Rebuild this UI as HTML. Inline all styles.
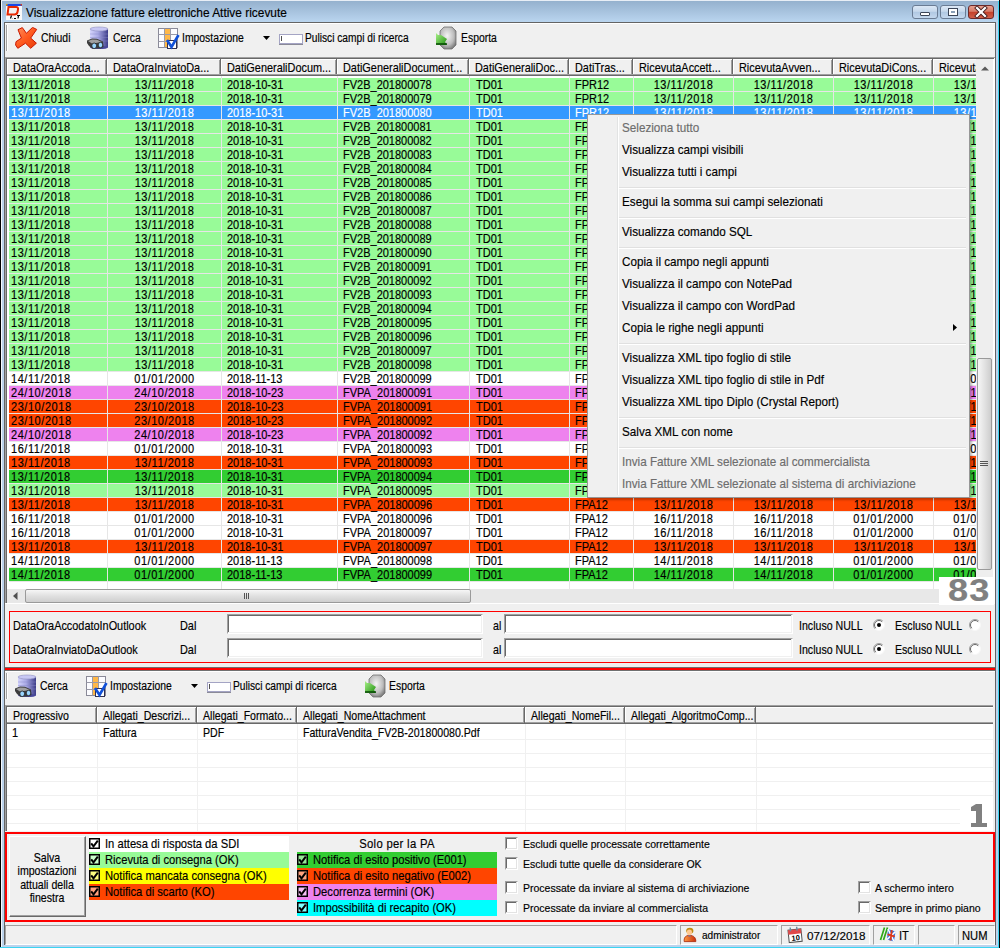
<!DOCTYPE html>
<html><head><meta charset="utf-8"><title>Visualizzazione fatture elettroniche Attive ricevute</title><style>*{margin:0;padding:0;box-sizing:border-box}
html,body{width:1000px;height:948px;overflow:hidden}
body{position:relative;background:#f0f0f0;font-family:"Liberation Sans",sans-serif;color:#000}
.a{position:absolute}
.t{position:absolute;white-space:nowrap;font-family:"Liberation Sans",sans-serif;-webkit-text-stroke-width:0.15px}
svg{display:block}</style></head><body>
<div class="a" style="left:0px;top:0px;width:1000px;height:948px;background:#bcd3ec"></div>
<div class="a" style="left:0px;top:0px;width:1000px;height:22px;background:linear-gradient(#93afcc,#bad5ef)"></div>
<div class="a" style="left:0px;top:0px;width:1px;height:948px;background:#000"></div>
<div class="a" style="left:1px;top:1px;width:1px;height:947px;background:#f4f8fc"></div>
<div class="a" style="left:999px;top:0px;width:1px;height:948px;background:#000"></div>
<div class="a" style="left:998px;top:1px;width:1px;height:947px;background:#3cd4f2"></div>
<div class="a" style="left:0px;top:947px;width:999px;height:1px;background:#3cd4f2"></div>
<div class="a" style="left:1px;top:0px;width:998px;height:1px;background:#e8eef6"></div>
<div class="a" style="left:4px;top:22px;width:992px;height:923px;background:#f0f0f0;border-top:1px solid #646464;border-left:1px solid #646464;border-right:1px solid #646464"></div>
<div class="a" style="left:5px;top:23px;width:990px;height:1px;background:#fff"></div>
<svg class="a" style="left:6px;top:4px" width="16" height="16" viewBox="0 0 16 16"><rect x="0" y="0" width="16" height="16" fill="#f8f8f8"/><rect x="0" y="0" width="16" height="2" fill="#1848e8"/><rect x="0" y="0" width="1.5" height="1.5" fill="#e0a000"/><rect x="14.5" y="0" width="1.5" height="1.5" fill="#e04010"/><path d="M2.5 3 H10 Q12.5 3 12 5.5 L11.5 8 Q11 10.5 8.5 10.5 H1.5 Z" fill="#f0f0f0" stroke="#e82800" stroke-width="2"/><path d="M4.5 14.5 L5.5 11.5 M6.5 14.5 L6.8 14.5 M8 14.5 H10 M11 11.5 H14 M12.5 11.5 L12 14.5" stroke="#000" stroke-width="1.2"/></svg>
<div class="t" style="left:26px;top:8px;font-size:11.9px;line-height:11.9px;color:#000;transform:scaleY(1.12);transform-origin:0 10px;">Visualizzazione fatture elettroniche Attive ricevute</div>
<div class="a" style="left:912px;top:5px;width:26px;height:14px;background:linear-gradient(#dce8f5 0%,#c6d8ec 45%,#b0c8e2 50%,#c4d8ee 100%);border:1px solid #6a7c94;border-radius:3px"></div>
<div class="a" style="left:940px;top:5px;width:26px;height:14px;background:linear-gradient(#dce8f5 0%,#c6d8ec 45%,#b0c8e2 50%,#c4d8ee 100%);border:1px solid #6a7c94;border-radius:3px"></div>
<div class="a" style="left:968px;top:5px;width:26px;height:14px;background:linear-gradient(#e8a090 0%,#d67a66 45%,#c4402a 50%,#d0604a 100%);border:1px solid #6b2a2a;border-radius:3px"></div>
<div class="a" style="left:920px;top:12px;width:10px;height:4px;background:#fff;border:1px solid #3c4658;border-radius:1px"></div>
<div class="a" style="left:948px;top:8px;width:10px;height:8px;background:#fff;border:1px solid #3c4658;"></div>
<div class="a" style="left:951px;top:11px;width:4px;height:2px;background:#8aa0b8;"></div>
<svg class="a" style="left:974px;top:6px" width="14" height="12" viewBox="0 0 14 12"><path d="M3 2 L11 10 M11 2 L3 10" stroke="#4a2020" stroke-width="4" stroke-linecap="square"/><path d="M3 2 L11 10 M11 2 L3 10" stroke="#fff" stroke-width="2.2" stroke-linecap="square"/></svg>
<div class="a" style="left:6px;top:25px;width:1px;height:26px;background:#a0a0a0"></div>
<div class="a" style="left:7px;top:25px;width:1px;height:26px;background:#fff"></div>
<svg class="a" style="left:15px;top:27px" width="23" height="23" viewBox="0 0 23 23"><defs><linearGradient id="gx" x1="0" y1="0" x2="1" y2="1"><stop offset="0" stop-color="#ff9060"/><stop offset="0.5" stop-color="#ff5a20"/><stop offset="1" stop-color="#e83c08"/></linearGradient></defs><path d="M3 2.7 L7.3 0.6 L11.4 6.3 L17.5 0.4 L21.7 2.4 L15.7 11.1 L21.4 16.2 L15.7 21.3 L10.5 16.2 L2.8 21.3 L0.6 18 L1 14.7 L6.4 11.1 Z" fill="url(#gx)" stroke="#c81800" stroke-width="1" stroke-linejoin="round"/></svg>
<div class="t" style="left:41px;top:34px;font-size:10.4px;line-height:10.4px;color:#000;transform:scaleY(1.2);transform-origin:0 9px;">Chiudi</div>
<svg class="a" style="left:84px;top:24px" width="28" height="28" viewBox="0 0 28 28"><defs><linearGradient id="gdb" x1="0" x2="1"><stop offset="0" stop-color="#d4d4fc"/><stop offset="0.45" stop-color="#a8a8e4"/><stop offset="1" stop-color="#3c3c88"/></linearGradient></defs><rect x="6" y="5" width="18" height="18.5" fill="url(#gdb)"/><ellipse cx="15" cy="5" rx="9" ry="2" fill="#c8c8f4" stroke="#9090c0" stroke-width="0.6"/><ellipse cx="15" cy="23.5" rx="9" ry="1.6" fill="#48489a"/><path d="M6 10 H24 M6 13.5 H24 M6 17 H24" stroke="#8888c8" stroke-width="0.7" opacity="0.6"/><path d="M3 16.5 L8 14.5 L13 14.8 L19 17.5 L19.5 23 L16 24.5 L12 24.5 L9 25 L5 22 L3 19 Z" fill="#3c3c3c"/><path d="M4 17 L8 15.5 L13 15.8 L18 18 L12 19 L8 19.5 Z" fill="#a0a0a0"/><ellipse cx="10.2" cy="21.8" rx="2.4" ry="2.8" fill="#9ad6ff" stroke="#202020" stroke-width="0.8"/><ellipse cx="16.5" cy="21" rx="2.3" ry="2.7" fill="#9ad6ff" stroke="#202020" stroke-width="0.8"/></svg>
<div class="t" style="left:113px;top:34px;font-size:10.4px;line-height:10.4px;color:#000;transform:scaleY(1.2);transform-origin:0 9px;">Cerca</div>
<svg class="a" style="left:157px;top:27px" width="24" height="23" viewBox="0 0 24 23"><rect x="1.5" y="1.5" width="19" height="19" fill="#fcfcff" stroke="#8a8a98"/><rect x="8" y="2" width="5.5" height="18" fill="#ffb848"/><path d="M1.5 7.5 H20.5 M1.5 14.5 H20.5 M7.5 1.5 V20.5 M13.5 1.5 V20.5" stroke="#9a9aa8" stroke-width="1"/><rect x="10.5" y="13.5" width="9" height="8" fill="#fff" stroke="#303050"/><path d="M10 13 L14.5 20 L21.5 8" fill="none" stroke="#1050d8" stroke-width="2.6"/></svg>
<div class="t" style="left:182px;top:34px;font-size:10.4px;line-height:10.4px;color:#000;transform:scaleY(1.2);transform-origin:0 9px;">Impostazione</div>
<svg class="a" style="left:263px;top:36px" width="8" height="5" viewBox="0 0 8 5"><path d="M0 0 H7 L3.5 4 Z" fill="#000"/></svg>
<div class="a" style="left:279px;top:34px;width:24px;height:10px;background:#fff;border:1px solid #a4a4c4;box-shadow:0 1px 0 #8a8a98"></div>
<div class="a" style="left:281px;top:36px;width:1px;height:5px;background:#505050"></div>
<div class="t" style="left:305px;top:34px;font-size:10.2px;line-height:10.2px;color:#000;transform:scaleY(1.2);transform-origin:0 9px;">Pulisci campi di ricerca</div>
<svg class="a" style="left:432px;top:24px" width="28" height="28" viewBox="0 0 28 28"><defs><radialGradient id="ge" cx="0.45" cy="0.4" r="0.7"><stop offset="0" stop-color="#f4f4f4"/><stop offset="0.6" stop-color="#bdbdbd"/><stop offset="1" stop-color="#6a6a6a"/></radialGradient><linearGradient id="gg" x1="0" y1="0" x2="1" y2="1"><stop offset="0" stop-color="#a8f088"/><stop offset="1" stop-color="#209010"/></linearGradient></defs><path d="M12 3 H20 L24 7 V21 L20 25 H12 L8 21 V7 Z" fill="url(#ge)" stroke="#707070" stroke-width="0.8"/><path d="M4 9 L6 11 L9 11 L15 15 L13 18 L15 21 L4 21 Z" fill="url(#gg)"/><path d="M4 20 H15" stroke="#004000" stroke-width="1.4"/></svg>
<div class="t" style="left:461px;top:34px;font-size:10.4px;line-height:10.4px;color:#000;transform:scaleY(1.2);transform-origin:0 9px;">Esporta</div>
<div class="a" style="left:5px;top:57px;width:990px;height:547px;background:#fff;border-top:1px solid #a0a0a0;border-left:1px solid #a0a0a0;"></div>
<div class="a" style="left:6px;top:58px;width:988px;height:1px;background:#696969"></div>
<div class="a" style="left:6px;top:58px;width:1px;height:545px;background:#696969"></div>
<div class="a" style="left:5px;top:603px;width:990px;height:1px;background:#fff"></div>
<div class="a" style="left:7px;top:59px;width:969px;height:530px;overflow:hidden">
<div class="a" style="left:0px;top:0px;width:100px;height:17px;background:#f0f0f0;border-top:1px solid #fff;border-left:1px solid #fff;"></div>
<div class="a" style="left:99px;top:0px;width:1px;height:17px;background:#696969"></div>
<div class="a" style="left:98px;top:1px;width:1px;height:15px;background:#a0a0a0"></div>
<div class="a" style="left:0px;top:15px;width:100px;height:1px;background:#a0a0a0"></div>
<div class="a" style="left:0px;top:16px;width:100px;height:1px;background:#696969"></div>
<div class="t" style="left:6px;top:4px;font-size:10.9px;line-height:10.9px;color:#000;transform:scaleY(1.125);transform-origin:0 9px;">DataOraAccoda...</div>
<div class="a" style="left:100px;top:0px;width:114px;height:17px;background:#f0f0f0;border-top:1px solid #fff;border-left:1px solid #fff;"></div>
<div class="a" style="left:213px;top:0px;width:1px;height:17px;background:#696969"></div>
<div class="a" style="left:212px;top:1px;width:1px;height:15px;background:#a0a0a0"></div>
<div class="a" style="left:100px;top:15px;width:114px;height:1px;background:#a0a0a0"></div>
<div class="a" style="left:100px;top:16px;width:114px;height:1px;background:#696969"></div>
<div class="t" style="left:106px;top:4px;font-size:10.9px;line-height:10.9px;color:#000;transform:scaleY(1.125);transform-origin:0 9px;">DataOraInviatoDa...</div>
<div class="a" style="left:214px;top:0px;width:116px;height:17px;background:#f0f0f0;border-top:1px solid #fff;border-left:1px solid #fff;"></div>
<div class="a" style="left:329px;top:0px;width:1px;height:17px;background:#696969"></div>
<div class="a" style="left:328px;top:1px;width:1px;height:15px;background:#a0a0a0"></div>
<div class="a" style="left:214px;top:15px;width:116px;height:1px;background:#a0a0a0"></div>
<div class="a" style="left:214px;top:16px;width:116px;height:1px;background:#696969"></div>
<div class="t" style="left:220px;top:4px;font-size:10.9px;line-height:10.9px;color:#000;transform:scaleY(1.125);transform-origin:0 9px;">DatiGeneraliDocum...</div>
<div class="a" style="left:330px;top:0px;width:132px;height:17px;background:#f0f0f0;border-top:1px solid #fff;border-left:1px solid #fff;"></div>
<div class="a" style="left:461px;top:0px;width:1px;height:17px;background:#696969"></div>
<div class="a" style="left:460px;top:1px;width:1px;height:15px;background:#a0a0a0"></div>
<div class="a" style="left:330px;top:15px;width:132px;height:1px;background:#a0a0a0"></div>
<div class="a" style="left:330px;top:16px;width:132px;height:1px;background:#696969"></div>
<div class="t" style="left:336px;top:4px;font-size:10.9px;line-height:10.9px;color:#000;transform:scaleY(1.125);transform-origin:0 9px;">DatiGeneraliDocument...</div>
<div class="a" style="left:462px;top:0px;width:100px;height:17px;background:#f0f0f0;border-top:1px solid #fff;border-left:1px solid #fff;"></div>
<div class="a" style="left:561px;top:0px;width:1px;height:17px;background:#696969"></div>
<div class="a" style="left:560px;top:1px;width:1px;height:15px;background:#a0a0a0"></div>
<div class="a" style="left:462px;top:15px;width:100px;height:1px;background:#a0a0a0"></div>
<div class="a" style="left:462px;top:16px;width:100px;height:1px;background:#696969"></div>
<div class="t" style="left:468px;top:4px;font-size:10.9px;line-height:10.9px;color:#000;transform:scaleY(1.125);transform-origin:0 9px;">DatiGeneraliDoc...</div>
<div class="a" style="left:562px;top:0px;width:64px;height:17px;background:#f0f0f0;border-top:1px solid #fff;border-left:1px solid #fff;"></div>
<div class="a" style="left:625px;top:0px;width:1px;height:17px;background:#696969"></div>
<div class="a" style="left:624px;top:1px;width:1px;height:15px;background:#a0a0a0"></div>
<div class="a" style="left:562px;top:15px;width:64px;height:1px;background:#a0a0a0"></div>
<div class="a" style="left:562px;top:16px;width:64px;height:1px;background:#696969"></div>
<div class="t" style="left:568px;top:4px;font-size:10.9px;line-height:10.9px;color:#000;transform:scaleY(1.125);transform-origin:0 9px;">DatiTras...</div>
<div class="a" style="left:626px;top:0px;width:100px;height:17px;background:#f0f0f0;border-top:1px solid #fff;border-left:1px solid #fff;"></div>
<div class="a" style="left:725px;top:0px;width:1px;height:17px;background:#696969"></div>
<div class="a" style="left:724px;top:1px;width:1px;height:15px;background:#a0a0a0"></div>
<div class="a" style="left:626px;top:15px;width:100px;height:1px;background:#a0a0a0"></div>
<div class="a" style="left:626px;top:16px;width:100px;height:1px;background:#696969"></div>
<div class="t" style="left:632px;top:4px;font-size:10.9px;line-height:10.9px;color:#000;transform:scaleY(1.125);transform-origin:0 9px;">RicevutaAccett...</div>
<div class="a" style="left:726px;top:0px;width:100px;height:17px;background:#f0f0f0;border-top:1px solid #fff;border-left:1px solid #fff;"></div>
<div class="a" style="left:825px;top:0px;width:1px;height:17px;background:#696969"></div>
<div class="a" style="left:824px;top:1px;width:1px;height:15px;background:#a0a0a0"></div>
<div class="a" style="left:726px;top:15px;width:100px;height:1px;background:#a0a0a0"></div>
<div class="a" style="left:726px;top:16px;width:100px;height:1px;background:#696969"></div>
<div class="t" style="left:732px;top:4px;font-size:10.9px;line-height:10.9px;color:#000;transform:scaleY(1.125);transform-origin:0 9px;">RicevutaAvven...</div>
<div class="a" style="left:826px;top:0px;width:100px;height:17px;background:#f0f0f0;border-top:1px solid #fff;border-left:1px solid #fff;"></div>
<div class="a" style="left:925px;top:0px;width:1px;height:17px;background:#696969"></div>
<div class="a" style="left:924px;top:1px;width:1px;height:15px;background:#a0a0a0"></div>
<div class="a" style="left:826px;top:15px;width:100px;height:1px;background:#a0a0a0"></div>
<div class="a" style="left:826px;top:16px;width:100px;height:1px;background:#696969"></div>
<div class="t" style="left:832px;top:4px;font-size:10.9px;line-height:10.9px;color:#000;transform:scaleY(1.125);transform-origin:0 9px;">RicevutaDiCons...</div>
<div class="a" style="left:926px;top:0px;width:100px;height:17px;background:#f0f0f0;border-top:1px solid #fff;border-left:1px solid #fff;"></div>
<div class="a" style="left:1025px;top:0px;width:1px;height:17px;background:#696969"></div>
<div class="a" style="left:1024px;top:1px;width:1px;height:15px;background:#a0a0a0"></div>
<div class="a" style="left:926px;top:15px;width:100px;height:1px;background:#a0a0a0"></div>
<div class="a" style="left:926px;top:16px;width:100px;height:1px;background:#696969"></div>
<div class="t" style="left:932px;top:4px;font-size:10.9px;line-height:10.9px;color:#000;transform:scaleY(1.125);transform-origin:0 9px;">Ricevuta...</div>
<div class="a" style="left:100px;top:17px;width:1px;height:513px;background:#e6e6e6"></div>
<div class="a" style="left:214px;top:17px;width:1px;height:513px;background:#e6e6e6"></div>
<div class="a" style="left:330px;top:17px;width:1px;height:513px;background:#e6e6e6"></div>
<div class="a" style="left:462px;top:17px;width:1px;height:513px;background:#e6e6e6"></div>
<div class="a" style="left:562px;top:17px;width:1px;height:513px;background:#e6e6e6"></div>
<div class="a" style="left:626px;top:17px;width:1px;height:513px;background:#e6e6e6"></div>
<div class="a" style="left:726px;top:17px;width:1px;height:513px;background:#e6e6e6"></div>
<div class="a" style="left:826px;top:17px;width:1px;height:513px;background:#e6e6e6"></div>
<div class="a" style="left:926px;top:17px;width:1px;height:513px;background:#e6e6e6"></div>
<div class="a" style="left:2px;top:19px;width:98px;height:13px;background:#98fb98"></div>
<div class="a" style="left:2px;top:32px;width:98px;height:1px;background:#e6e6e6"></div>
<div class="t" style="left:4px;top:21px;font-size:11px;line-height:11px;color:#000;transform:scaleY(1.125);transform-origin:0 9px;letter-spacing:0.55px;">13/11/2018</div>
<div class="a" style="left:101px;top:19px;width:113px;height:13px;background:#98fb98"></div>
<div class="a" style="left:101px;top:32px;width:113px;height:1px;background:#e6e6e6"></div>
<div class="t" style="left:101px;top:21px;font-size:11px;line-height:11px;color:#000;width:113px;overflow:hidden;text-align:center;transform:scaleY(1.125);transform-origin:0 9px;letter-spacing:0.55px;">13/11/2018</div>
<div class="a" style="left:215px;top:19px;width:115px;height:13px;background:#98fb98"></div>
<div class="a" style="left:215px;top:32px;width:115px;height:1px;background:#e6e6e6"></div>
<div class="t" style="left:220px;top:21px;font-size:11px;line-height:11px;color:#000;transform:scaleY(1.125);transform-origin:0 9px;">2018-10-31</div>
<div class="a" style="left:331px;top:19px;width:131px;height:13px;background:#98fb98"></div>
<div class="a" style="left:331px;top:32px;width:131px;height:1px;background:#e6e6e6"></div>
<div class="t" style="left:336px;top:21px;font-size:11px;line-height:11px;color:#000;transform:scaleY(1.125);transform-origin:0 9px;">FV2B_201800078</div>
<div class="a" style="left:463px;top:19px;width:99px;height:13px;background:#98fb98"></div>
<div class="a" style="left:463px;top:32px;width:99px;height:1px;background:#e6e6e6"></div>
<div class="t" style="left:469px;top:21px;font-size:11px;line-height:11px;color:#000;transform:scaleY(1.125);transform-origin:0 9px;">TD01</div>
<div class="a" style="left:563px;top:19px;width:63px;height:13px;background:#98fb98"></div>
<div class="a" style="left:563px;top:32px;width:63px;height:1px;background:#e6e6e6"></div>
<div class="t" style="left:568px;top:21px;font-size:11px;line-height:11px;color:#000;transform:scaleY(1.125);transform-origin:0 9px;">FPR12</div>
<div class="a" style="left:627px;top:19px;width:99px;height:13px;background:#98fb98"></div>
<div class="a" style="left:627px;top:32px;width:99px;height:1px;background:#e6e6e6"></div>
<div class="t" style="left:627px;top:21px;font-size:11px;line-height:11px;color:#000;width:99px;overflow:hidden;text-align:center;transform:scaleY(1.125);transform-origin:0 9px;letter-spacing:0.55px;">13/11/2018</div>
<div class="a" style="left:727px;top:19px;width:99px;height:13px;background:#98fb98"></div>
<div class="a" style="left:727px;top:32px;width:99px;height:1px;background:#e6e6e6"></div>
<div class="t" style="left:727px;top:21px;font-size:11px;line-height:11px;color:#000;width:99px;overflow:hidden;text-align:center;transform:scaleY(1.125);transform-origin:0 9px;letter-spacing:0.55px;">13/11/2018</div>
<div class="a" style="left:827px;top:19px;width:99px;height:13px;background:#98fb98"></div>
<div class="a" style="left:827px;top:32px;width:99px;height:1px;background:#e6e6e6"></div>
<div class="t" style="left:827px;top:21px;font-size:11px;line-height:11px;color:#000;width:99px;overflow:hidden;text-align:center;transform:scaleY(1.125);transform-origin:0 9px;letter-spacing:0.55px;">13/11/2018</div>
<div class="a" style="left:927px;top:19px;width:99px;height:13px;background:#98fb98"></div>
<div class="a" style="left:927px;top:32px;width:99px;height:1px;background:#e6e6e6"></div>
<div class="t" style="left:927px;top:21px;font-size:11px;line-height:11px;color:#000;width:99px;overflow:hidden;text-align:center;transform:scaleY(1.125);transform-origin:0 9px;letter-spacing:0.55px;">13/11/2018</div>
<div class="a" style="left:2px;top:33px;width:98px;height:13px;background:#98fb98"></div>
<div class="a" style="left:2px;top:46px;width:98px;height:1px;background:#e6e6e6"></div>
<div class="t" style="left:4px;top:35px;font-size:11px;line-height:11px;color:#000;transform:scaleY(1.125);transform-origin:0 9px;letter-spacing:0.55px;">13/11/2018</div>
<div class="a" style="left:101px;top:33px;width:113px;height:13px;background:#98fb98"></div>
<div class="a" style="left:101px;top:46px;width:113px;height:1px;background:#e6e6e6"></div>
<div class="t" style="left:101px;top:35px;font-size:11px;line-height:11px;color:#000;width:113px;overflow:hidden;text-align:center;transform:scaleY(1.125);transform-origin:0 9px;letter-spacing:0.55px;">13/11/2018</div>
<div class="a" style="left:215px;top:33px;width:115px;height:13px;background:#98fb98"></div>
<div class="a" style="left:215px;top:46px;width:115px;height:1px;background:#e6e6e6"></div>
<div class="t" style="left:220px;top:35px;font-size:11px;line-height:11px;color:#000;transform:scaleY(1.125);transform-origin:0 9px;">2018-10-31</div>
<div class="a" style="left:331px;top:33px;width:131px;height:13px;background:#98fb98"></div>
<div class="a" style="left:331px;top:46px;width:131px;height:1px;background:#e6e6e6"></div>
<div class="t" style="left:336px;top:35px;font-size:11px;line-height:11px;color:#000;transform:scaleY(1.125);transform-origin:0 9px;">FV2B_201800079</div>
<div class="a" style="left:463px;top:33px;width:99px;height:13px;background:#98fb98"></div>
<div class="a" style="left:463px;top:46px;width:99px;height:1px;background:#e6e6e6"></div>
<div class="t" style="left:469px;top:35px;font-size:11px;line-height:11px;color:#000;transform:scaleY(1.125);transform-origin:0 9px;">TD01</div>
<div class="a" style="left:563px;top:33px;width:63px;height:13px;background:#98fb98"></div>
<div class="a" style="left:563px;top:46px;width:63px;height:1px;background:#e6e6e6"></div>
<div class="t" style="left:568px;top:35px;font-size:11px;line-height:11px;color:#000;transform:scaleY(1.125);transform-origin:0 9px;">FPR12</div>
<div class="a" style="left:627px;top:33px;width:99px;height:13px;background:#98fb98"></div>
<div class="a" style="left:627px;top:46px;width:99px;height:1px;background:#e6e6e6"></div>
<div class="t" style="left:627px;top:35px;font-size:11px;line-height:11px;color:#000;width:99px;overflow:hidden;text-align:center;transform:scaleY(1.125);transform-origin:0 9px;letter-spacing:0.55px;">13/11/2018</div>
<div class="a" style="left:727px;top:33px;width:99px;height:13px;background:#98fb98"></div>
<div class="a" style="left:727px;top:46px;width:99px;height:1px;background:#e6e6e6"></div>
<div class="t" style="left:727px;top:35px;font-size:11px;line-height:11px;color:#000;width:99px;overflow:hidden;text-align:center;transform:scaleY(1.125);transform-origin:0 9px;letter-spacing:0.55px;">13/11/2018</div>
<div class="a" style="left:827px;top:33px;width:99px;height:13px;background:#98fb98"></div>
<div class="a" style="left:827px;top:46px;width:99px;height:1px;background:#e6e6e6"></div>
<div class="t" style="left:827px;top:35px;font-size:11px;line-height:11px;color:#000;width:99px;overflow:hidden;text-align:center;transform:scaleY(1.125);transform-origin:0 9px;letter-spacing:0.55px;">13/11/2018</div>
<div class="a" style="left:927px;top:33px;width:99px;height:13px;background:#98fb98"></div>
<div class="a" style="left:927px;top:46px;width:99px;height:1px;background:#e6e6e6"></div>
<div class="t" style="left:927px;top:35px;font-size:11px;line-height:11px;color:#000;width:99px;overflow:hidden;text-align:center;transform:scaleY(1.125);transform-origin:0 9px;letter-spacing:0.55px;">13/11/2018</div>
<div class="a" style="left:2px;top:47px;width:98px;height:13px;background:#3399ff"></div>
<div class="a" style="left:2px;top:60px;width:98px;height:1px;background:#e6e6e6"></div>
<div class="t" style="left:4px;top:49px;font-size:11px;line-height:11px;color:#fff;transform:scaleY(1.125);transform-origin:0 9px;letter-spacing:0.55px;">13/11/2018</div>
<div class="a" style="left:101px;top:47px;width:113px;height:13px;background:#3399ff"></div>
<div class="a" style="left:101px;top:60px;width:113px;height:1px;background:#e6e6e6"></div>
<div class="t" style="left:101px;top:49px;font-size:11px;line-height:11px;color:#fff;width:113px;overflow:hidden;text-align:center;transform:scaleY(1.125);transform-origin:0 9px;letter-spacing:0.55px;">13/11/2018</div>
<div class="a" style="left:215px;top:47px;width:115px;height:13px;background:#3399ff"></div>
<div class="a" style="left:215px;top:60px;width:115px;height:1px;background:#e6e6e6"></div>
<div class="t" style="left:220px;top:49px;font-size:11px;line-height:11px;color:#fff;transform:scaleY(1.125);transform-origin:0 9px;">2018-10-31</div>
<div class="a" style="left:331px;top:47px;width:131px;height:13px;background:#3399ff"></div>
<div class="a" style="left:331px;top:60px;width:131px;height:1px;background:#e6e6e6"></div>
<div class="t" style="left:336px;top:49px;font-size:11px;line-height:11px;color:#fff;transform:scaleY(1.125);transform-origin:0 9px;">FV2B_201800080</div>
<div class="a" style="left:463px;top:47px;width:99px;height:13px;background:#3399ff"></div>
<div class="a" style="left:463px;top:60px;width:99px;height:1px;background:#e6e6e6"></div>
<div class="t" style="left:469px;top:49px;font-size:11px;line-height:11px;color:#fff;transform:scaleY(1.125);transform-origin:0 9px;">TD01</div>
<div class="a" style="left:563px;top:47px;width:63px;height:13px;background:#3399ff"></div>
<div class="a" style="left:563px;top:60px;width:63px;height:1px;background:#e6e6e6"></div>
<div class="t" style="left:568px;top:49px;font-size:11px;line-height:11px;color:#fff;transform:scaleY(1.125);transform-origin:0 9px;">FPR12</div>
<div class="a" style="left:627px;top:47px;width:99px;height:13px;background:#3399ff"></div>
<div class="a" style="left:627px;top:60px;width:99px;height:1px;background:#e6e6e6"></div>
<div class="t" style="left:627px;top:49px;font-size:11px;line-height:11px;color:#fff;width:99px;overflow:hidden;text-align:center;transform:scaleY(1.125);transform-origin:0 9px;letter-spacing:0.55px;">13/11/2018</div>
<div class="a" style="left:727px;top:47px;width:99px;height:13px;background:#3399ff"></div>
<div class="a" style="left:727px;top:60px;width:99px;height:1px;background:#e6e6e6"></div>
<div class="t" style="left:727px;top:49px;font-size:11px;line-height:11px;color:#fff;width:99px;overflow:hidden;text-align:center;transform:scaleY(1.125);transform-origin:0 9px;letter-spacing:0.55px;">13/11/2018</div>
<div class="a" style="left:827px;top:47px;width:99px;height:13px;background:#3399ff"></div>
<div class="a" style="left:827px;top:60px;width:99px;height:1px;background:#e6e6e6"></div>
<div class="t" style="left:827px;top:49px;font-size:11px;line-height:11px;color:#fff;width:99px;overflow:hidden;text-align:center;transform:scaleY(1.125);transform-origin:0 9px;letter-spacing:0.55px;">13/11/2018</div>
<div class="a" style="left:927px;top:47px;width:99px;height:13px;background:#3399ff"></div>
<div class="a" style="left:927px;top:60px;width:99px;height:1px;background:#e6e6e6"></div>
<div class="t" style="left:927px;top:49px;font-size:11px;line-height:11px;color:#fff;width:99px;overflow:hidden;text-align:center;transform:scaleY(1.125);transform-origin:0 9px;letter-spacing:0.55px;">13/11/2018</div>
<div class="a" style="left:2px;top:61px;width:98px;height:13px;background:#98fb98"></div>
<div class="a" style="left:2px;top:74px;width:98px;height:1px;background:#e6e6e6"></div>
<div class="t" style="left:4px;top:63px;font-size:11px;line-height:11px;color:#000;transform:scaleY(1.125);transform-origin:0 9px;letter-spacing:0.55px;">13/11/2018</div>
<div class="a" style="left:101px;top:61px;width:113px;height:13px;background:#98fb98"></div>
<div class="a" style="left:101px;top:74px;width:113px;height:1px;background:#e6e6e6"></div>
<div class="t" style="left:101px;top:63px;font-size:11px;line-height:11px;color:#000;width:113px;overflow:hidden;text-align:center;transform:scaleY(1.125);transform-origin:0 9px;letter-spacing:0.55px;">13/11/2018</div>
<div class="a" style="left:215px;top:61px;width:115px;height:13px;background:#98fb98"></div>
<div class="a" style="left:215px;top:74px;width:115px;height:1px;background:#e6e6e6"></div>
<div class="t" style="left:220px;top:63px;font-size:11px;line-height:11px;color:#000;transform:scaleY(1.125);transform-origin:0 9px;">2018-10-31</div>
<div class="a" style="left:331px;top:61px;width:131px;height:13px;background:#98fb98"></div>
<div class="a" style="left:331px;top:74px;width:131px;height:1px;background:#e6e6e6"></div>
<div class="t" style="left:336px;top:63px;font-size:11px;line-height:11px;color:#000;transform:scaleY(1.125);transform-origin:0 9px;">FV2B_201800081</div>
<div class="a" style="left:463px;top:61px;width:99px;height:13px;background:#98fb98"></div>
<div class="a" style="left:463px;top:74px;width:99px;height:1px;background:#e6e6e6"></div>
<div class="t" style="left:469px;top:63px;font-size:11px;line-height:11px;color:#000;transform:scaleY(1.125);transform-origin:0 9px;">TD01</div>
<div class="a" style="left:563px;top:61px;width:63px;height:13px;background:#98fb98"></div>
<div class="a" style="left:563px;top:74px;width:63px;height:1px;background:#e6e6e6"></div>
<div class="t" style="left:568px;top:63px;font-size:11px;line-height:11px;color:#000;transform:scaleY(1.125);transform-origin:0 9px;">FPR12</div>
<div class="a" style="left:627px;top:61px;width:99px;height:13px;background:#98fb98"></div>
<div class="a" style="left:627px;top:74px;width:99px;height:1px;background:#e6e6e6"></div>
<div class="t" style="left:627px;top:63px;font-size:11px;line-height:11px;color:#000;width:99px;overflow:hidden;text-align:center;transform:scaleY(1.125);transform-origin:0 9px;letter-spacing:0.55px;">13/11/2018</div>
<div class="a" style="left:727px;top:61px;width:99px;height:13px;background:#98fb98"></div>
<div class="a" style="left:727px;top:74px;width:99px;height:1px;background:#e6e6e6"></div>
<div class="t" style="left:727px;top:63px;font-size:11px;line-height:11px;color:#000;width:99px;overflow:hidden;text-align:center;transform:scaleY(1.125);transform-origin:0 9px;letter-spacing:0.55px;">13/11/2018</div>
<div class="a" style="left:827px;top:61px;width:99px;height:13px;background:#98fb98"></div>
<div class="a" style="left:827px;top:74px;width:99px;height:1px;background:#e6e6e6"></div>
<div class="t" style="left:827px;top:63px;font-size:11px;line-height:11px;color:#000;width:99px;overflow:hidden;text-align:center;transform:scaleY(1.125);transform-origin:0 9px;letter-spacing:0.55px;">13/11/2018</div>
<div class="a" style="left:927px;top:61px;width:99px;height:13px;background:#98fb98"></div>
<div class="a" style="left:927px;top:74px;width:99px;height:1px;background:#e6e6e6"></div>
<div class="t" style="left:927px;top:63px;font-size:11px;line-height:11px;color:#000;width:99px;overflow:hidden;text-align:center;transform:scaleY(1.125);transform-origin:0 9px;letter-spacing:0.55px;">13/11/2018</div>
<div class="a" style="left:2px;top:75px;width:98px;height:13px;background:#98fb98"></div>
<div class="a" style="left:2px;top:88px;width:98px;height:1px;background:#e6e6e6"></div>
<div class="t" style="left:4px;top:77px;font-size:11px;line-height:11px;color:#000;transform:scaleY(1.125);transform-origin:0 9px;letter-spacing:0.55px;">13/11/2018</div>
<div class="a" style="left:101px;top:75px;width:113px;height:13px;background:#98fb98"></div>
<div class="a" style="left:101px;top:88px;width:113px;height:1px;background:#e6e6e6"></div>
<div class="t" style="left:101px;top:77px;font-size:11px;line-height:11px;color:#000;width:113px;overflow:hidden;text-align:center;transform:scaleY(1.125);transform-origin:0 9px;letter-spacing:0.55px;">13/11/2018</div>
<div class="a" style="left:215px;top:75px;width:115px;height:13px;background:#98fb98"></div>
<div class="a" style="left:215px;top:88px;width:115px;height:1px;background:#e6e6e6"></div>
<div class="t" style="left:220px;top:77px;font-size:11px;line-height:11px;color:#000;transform:scaleY(1.125);transform-origin:0 9px;">2018-10-31</div>
<div class="a" style="left:331px;top:75px;width:131px;height:13px;background:#98fb98"></div>
<div class="a" style="left:331px;top:88px;width:131px;height:1px;background:#e6e6e6"></div>
<div class="t" style="left:336px;top:77px;font-size:11px;line-height:11px;color:#000;transform:scaleY(1.125);transform-origin:0 9px;">FV2B_201800082</div>
<div class="a" style="left:463px;top:75px;width:99px;height:13px;background:#98fb98"></div>
<div class="a" style="left:463px;top:88px;width:99px;height:1px;background:#e6e6e6"></div>
<div class="t" style="left:469px;top:77px;font-size:11px;line-height:11px;color:#000;transform:scaleY(1.125);transform-origin:0 9px;">TD01</div>
<div class="a" style="left:563px;top:75px;width:63px;height:13px;background:#98fb98"></div>
<div class="a" style="left:563px;top:88px;width:63px;height:1px;background:#e6e6e6"></div>
<div class="t" style="left:568px;top:77px;font-size:11px;line-height:11px;color:#000;transform:scaleY(1.125);transform-origin:0 9px;">FPR12</div>
<div class="a" style="left:627px;top:75px;width:99px;height:13px;background:#98fb98"></div>
<div class="a" style="left:627px;top:88px;width:99px;height:1px;background:#e6e6e6"></div>
<div class="t" style="left:627px;top:77px;font-size:11px;line-height:11px;color:#000;width:99px;overflow:hidden;text-align:center;transform:scaleY(1.125);transform-origin:0 9px;letter-spacing:0.55px;">13/11/2018</div>
<div class="a" style="left:727px;top:75px;width:99px;height:13px;background:#98fb98"></div>
<div class="a" style="left:727px;top:88px;width:99px;height:1px;background:#e6e6e6"></div>
<div class="t" style="left:727px;top:77px;font-size:11px;line-height:11px;color:#000;width:99px;overflow:hidden;text-align:center;transform:scaleY(1.125);transform-origin:0 9px;letter-spacing:0.55px;">13/11/2018</div>
<div class="a" style="left:827px;top:75px;width:99px;height:13px;background:#98fb98"></div>
<div class="a" style="left:827px;top:88px;width:99px;height:1px;background:#e6e6e6"></div>
<div class="t" style="left:827px;top:77px;font-size:11px;line-height:11px;color:#000;width:99px;overflow:hidden;text-align:center;transform:scaleY(1.125);transform-origin:0 9px;letter-spacing:0.55px;">13/11/2018</div>
<div class="a" style="left:927px;top:75px;width:99px;height:13px;background:#98fb98"></div>
<div class="a" style="left:927px;top:88px;width:99px;height:1px;background:#e6e6e6"></div>
<div class="t" style="left:927px;top:77px;font-size:11px;line-height:11px;color:#000;width:99px;overflow:hidden;text-align:center;transform:scaleY(1.125);transform-origin:0 9px;letter-spacing:0.55px;">13/11/2018</div>
<div class="a" style="left:2px;top:89px;width:98px;height:13px;background:#98fb98"></div>
<div class="a" style="left:2px;top:102px;width:98px;height:1px;background:#e6e6e6"></div>
<div class="t" style="left:4px;top:91px;font-size:11px;line-height:11px;color:#000;transform:scaleY(1.125);transform-origin:0 9px;letter-spacing:0.55px;">13/11/2018</div>
<div class="a" style="left:101px;top:89px;width:113px;height:13px;background:#98fb98"></div>
<div class="a" style="left:101px;top:102px;width:113px;height:1px;background:#e6e6e6"></div>
<div class="t" style="left:101px;top:91px;font-size:11px;line-height:11px;color:#000;width:113px;overflow:hidden;text-align:center;transform:scaleY(1.125);transform-origin:0 9px;letter-spacing:0.55px;">13/11/2018</div>
<div class="a" style="left:215px;top:89px;width:115px;height:13px;background:#98fb98"></div>
<div class="a" style="left:215px;top:102px;width:115px;height:1px;background:#e6e6e6"></div>
<div class="t" style="left:220px;top:91px;font-size:11px;line-height:11px;color:#000;transform:scaleY(1.125);transform-origin:0 9px;">2018-10-31</div>
<div class="a" style="left:331px;top:89px;width:131px;height:13px;background:#98fb98"></div>
<div class="a" style="left:331px;top:102px;width:131px;height:1px;background:#e6e6e6"></div>
<div class="t" style="left:336px;top:91px;font-size:11px;line-height:11px;color:#000;transform:scaleY(1.125);transform-origin:0 9px;">FV2B_201800083</div>
<div class="a" style="left:463px;top:89px;width:99px;height:13px;background:#98fb98"></div>
<div class="a" style="left:463px;top:102px;width:99px;height:1px;background:#e6e6e6"></div>
<div class="t" style="left:469px;top:91px;font-size:11px;line-height:11px;color:#000;transform:scaleY(1.125);transform-origin:0 9px;">TD01</div>
<div class="a" style="left:563px;top:89px;width:63px;height:13px;background:#98fb98"></div>
<div class="a" style="left:563px;top:102px;width:63px;height:1px;background:#e6e6e6"></div>
<div class="t" style="left:568px;top:91px;font-size:11px;line-height:11px;color:#000;transform:scaleY(1.125);transform-origin:0 9px;">FPR12</div>
<div class="a" style="left:627px;top:89px;width:99px;height:13px;background:#98fb98"></div>
<div class="a" style="left:627px;top:102px;width:99px;height:1px;background:#e6e6e6"></div>
<div class="t" style="left:627px;top:91px;font-size:11px;line-height:11px;color:#000;width:99px;overflow:hidden;text-align:center;transform:scaleY(1.125);transform-origin:0 9px;letter-spacing:0.55px;">13/11/2018</div>
<div class="a" style="left:727px;top:89px;width:99px;height:13px;background:#98fb98"></div>
<div class="a" style="left:727px;top:102px;width:99px;height:1px;background:#e6e6e6"></div>
<div class="t" style="left:727px;top:91px;font-size:11px;line-height:11px;color:#000;width:99px;overflow:hidden;text-align:center;transform:scaleY(1.125);transform-origin:0 9px;letter-spacing:0.55px;">13/11/2018</div>
<div class="a" style="left:827px;top:89px;width:99px;height:13px;background:#98fb98"></div>
<div class="a" style="left:827px;top:102px;width:99px;height:1px;background:#e6e6e6"></div>
<div class="t" style="left:827px;top:91px;font-size:11px;line-height:11px;color:#000;width:99px;overflow:hidden;text-align:center;transform:scaleY(1.125);transform-origin:0 9px;letter-spacing:0.55px;">13/11/2018</div>
<div class="a" style="left:927px;top:89px;width:99px;height:13px;background:#98fb98"></div>
<div class="a" style="left:927px;top:102px;width:99px;height:1px;background:#e6e6e6"></div>
<div class="t" style="left:927px;top:91px;font-size:11px;line-height:11px;color:#000;width:99px;overflow:hidden;text-align:center;transform:scaleY(1.125);transform-origin:0 9px;letter-spacing:0.55px;">13/11/2018</div>
<div class="a" style="left:2px;top:103px;width:98px;height:13px;background:#98fb98"></div>
<div class="a" style="left:2px;top:116px;width:98px;height:1px;background:#e6e6e6"></div>
<div class="t" style="left:4px;top:105px;font-size:11px;line-height:11px;color:#000;transform:scaleY(1.125);transform-origin:0 9px;letter-spacing:0.55px;">13/11/2018</div>
<div class="a" style="left:101px;top:103px;width:113px;height:13px;background:#98fb98"></div>
<div class="a" style="left:101px;top:116px;width:113px;height:1px;background:#e6e6e6"></div>
<div class="t" style="left:101px;top:105px;font-size:11px;line-height:11px;color:#000;width:113px;overflow:hidden;text-align:center;transform:scaleY(1.125);transform-origin:0 9px;letter-spacing:0.55px;">13/11/2018</div>
<div class="a" style="left:215px;top:103px;width:115px;height:13px;background:#98fb98"></div>
<div class="a" style="left:215px;top:116px;width:115px;height:1px;background:#e6e6e6"></div>
<div class="t" style="left:220px;top:105px;font-size:11px;line-height:11px;color:#000;transform:scaleY(1.125);transform-origin:0 9px;">2018-10-31</div>
<div class="a" style="left:331px;top:103px;width:131px;height:13px;background:#98fb98"></div>
<div class="a" style="left:331px;top:116px;width:131px;height:1px;background:#e6e6e6"></div>
<div class="t" style="left:336px;top:105px;font-size:11px;line-height:11px;color:#000;transform:scaleY(1.125);transform-origin:0 9px;">FV2B_201800084</div>
<div class="a" style="left:463px;top:103px;width:99px;height:13px;background:#98fb98"></div>
<div class="a" style="left:463px;top:116px;width:99px;height:1px;background:#e6e6e6"></div>
<div class="t" style="left:469px;top:105px;font-size:11px;line-height:11px;color:#000;transform:scaleY(1.125);transform-origin:0 9px;">TD01</div>
<div class="a" style="left:563px;top:103px;width:63px;height:13px;background:#98fb98"></div>
<div class="a" style="left:563px;top:116px;width:63px;height:1px;background:#e6e6e6"></div>
<div class="t" style="left:568px;top:105px;font-size:11px;line-height:11px;color:#000;transform:scaleY(1.125);transform-origin:0 9px;">FPR12</div>
<div class="a" style="left:627px;top:103px;width:99px;height:13px;background:#98fb98"></div>
<div class="a" style="left:627px;top:116px;width:99px;height:1px;background:#e6e6e6"></div>
<div class="t" style="left:627px;top:105px;font-size:11px;line-height:11px;color:#000;width:99px;overflow:hidden;text-align:center;transform:scaleY(1.125);transform-origin:0 9px;letter-spacing:0.55px;">13/11/2018</div>
<div class="a" style="left:727px;top:103px;width:99px;height:13px;background:#98fb98"></div>
<div class="a" style="left:727px;top:116px;width:99px;height:1px;background:#e6e6e6"></div>
<div class="t" style="left:727px;top:105px;font-size:11px;line-height:11px;color:#000;width:99px;overflow:hidden;text-align:center;transform:scaleY(1.125);transform-origin:0 9px;letter-spacing:0.55px;">13/11/2018</div>
<div class="a" style="left:827px;top:103px;width:99px;height:13px;background:#98fb98"></div>
<div class="a" style="left:827px;top:116px;width:99px;height:1px;background:#e6e6e6"></div>
<div class="t" style="left:827px;top:105px;font-size:11px;line-height:11px;color:#000;width:99px;overflow:hidden;text-align:center;transform:scaleY(1.125);transform-origin:0 9px;letter-spacing:0.55px;">13/11/2018</div>
<div class="a" style="left:927px;top:103px;width:99px;height:13px;background:#98fb98"></div>
<div class="a" style="left:927px;top:116px;width:99px;height:1px;background:#e6e6e6"></div>
<div class="t" style="left:927px;top:105px;font-size:11px;line-height:11px;color:#000;width:99px;overflow:hidden;text-align:center;transform:scaleY(1.125);transform-origin:0 9px;letter-spacing:0.55px;">13/11/2018</div>
<div class="a" style="left:2px;top:117px;width:98px;height:13px;background:#98fb98"></div>
<div class="a" style="left:2px;top:130px;width:98px;height:1px;background:#e6e6e6"></div>
<div class="t" style="left:4px;top:119px;font-size:11px;line-height:11px;color:#000;transform:scaleY(1.125);transform-origin:0 9px;letter-spacing:0.55px;">13/11/2018</div>
<div class="a" style="left:101px;top:117px;width:113px;height:13px;background:#98fb98"></div>
<div class="a" style="left:101px;top:130px;width:113px;height:1px;background:#e6e6e6"></div>
<div class="t" style="left:101px;top:119px;font-size:11px;line-height:11px;color:#000;width:113px;overflow:hidden;text-align:center;transform:scaleY(1.125);transform-origin:0 9px;letter-spacing:0.55px;">13/11/2018</div>
<div class="a" style="left:215px;top:117px;width:115px;height:13px;background:#98fb98"></div>
<div class="a" style="left:215px;top:130px;width:115px;height:1px;background:#e6e6e6"></div>
<div class="t" style="left:220px;top:119px;font-size:11px;line-height:11px;color:#000;transform:scaleY(1.125);transform-origin:0 9px;">2018-10-31</div>
<div class="a" style="left:331px;top:117px;width:131px;height:13px;background:#98fb98"></div>
<div class="a" style="left:331px;top:130px;width:131px;height:1px;background:#e6e6e6"></div>
<div class="t" style="left:336px;top:119px;font-size:11px;line-height:11px;color:#000;transform:scaleY(1.125);transform-origin:0 9px;">FV2B_201800085</div>
<div class="a" style="left:463px;top:117px;width:99px;height:13px;background:#98fb98"></div>
<div class="a" style="left:463px;top:130px;width:99px;height:1px;background:#e6e6e6"></div>
<div class="t" style="left:469px;top:119px;font-size:11px;line-height:11px;color:#000;transform:scaleY(1.125);transform-origin:0 9px;">TD01</div>
<div class="a" style="left:563px;top:117px;width:63px;height:13px;background:#98fb98"></div>
<div class="a" style="left:563px;top:130px;width:63px;height:1px;background:#e6e6e6"></div>
<div class="t" style="left:568px;top:119px;font-size:11px;line-height:11px;color:#000;transform:scaleY(1.125);transform-origin:0 9px;">FPR12</div>
<div class="a" style="left:627px;top:117px;width:99px;height:13px;background:#98fb98"></div>
<div class="a" style="left:627px;top:130px;width:99px;height:1px;background:#e6e6e6"></div>
<div class="t" style="left:627px;top:119px;font-size:11px;line-height:11px;color:#000;width:99px;overflow:hidden;text-align:center;transform:scaleY(1.125);transform-origin:0 9px;letter-spacing:0.55px;">13/11/2018</div>
<div class="a" style="left:727px;top:117px;width:99px;height:13px;background:#98fb98"></div>
<div class="a" style="left:727px;top:130px;width:99px;height:1px;background:#e6e6e6"></div>
<div class="t" style="left:727px;top:119px;font-size:11px;line-height:11px;color:#000;width:99px;overflow:hidden;text-align:center;transform:scaleY(1.125);transform-origin:0 9px;letter-spacing:0.55px;">13/11/2018</div>
<div class="a" style="left:827px;top:117px;width:99px;height:13px;background:#98fb98"></div>
<div class="a" style="left:827px;top:130px;width:99px;height:1px;background:#e6e6e6"></div>
<div class="t" style="left:827px;top:119px;font-size:11px;line-height:11px;color:#000;width:99px;overflow:hidden;text-align:center;transform:scaleY(1.125);transform-origin:0 9px;letter-spacing:0.55px;">13/11/2018</div>
<div class="a" style="left:927px;top:117px;width:99px;height:13px;background:#98fb98"></div>
<div class="a" style="left:927px;top:130px;width:99px;height:1px;background:#e6e6e6"></div>
<div class="t" style="left:927px;top:119px;font-size:11px;line-height:11px;color:#000;width:99px;overflow:hidden;text-align:center;transform:scaleY(1.125);transform-origin:0 9px;letter-spacing:0.55px;">13/11/2018</div>
<div class="a" style="left:2px;top:131px;width:98px;height:13px;background:#98fb98"></div>
<div class="a" style="left:2px;top:144px;width:98px;height:1px;background:#e6e6e6"></div>
<div class="t" style="left:4px;top:133px;font-size:11px;line-height:11px;color:#000;transform:scaleY(1.125);transform-origin:0 9px;letter-spacing:0.55px;">13/11/2018</div>
<div class="a" style="left:101px;top:131px;width:113px;height:13px;background:#98fb98"></div>
<div class="a" style="left:101px;top:144px;width:113px;height:1px;background:#e6e6e6"></div>
<div class="t" style="left:101px;top:133px;font-size:11px;line-height:11px;color:#000;width:113px;overflow:hidden;text-align:center;transform:scaleY(1.125);transform-origin:0 9px;letter-spacing:0.55px;">13/11/2018</div>
<div class="a" style="left:215px;top:131px;width:115px;height:13px;background:#98fb98"></div>
<div class="a" style="left:215px;top:144px;width:115px;height:1px;background:#e6e6e6"></div>
<div class="t" style="left:220px;top:133px;font-size:11px;line-height:11px;color:#000;transform:scaleY(1.125);transform-origin:0 9px;">2018-10-31</div>
<div class="a" style="left:331px;top:131px;width:131px;height:13px;background:#98fb98"></div>
<div class="a" style="left:331px;top:144px;width:131px;height:1px;background:#e6e6e6"></div>
<div class="t" style="left:336px;top:133px;font-size:11px;line-height:11px;color:#000;transform:scaleY(1.125);transform-origin:0 9px;">FV2B_201800086</div>
<div class="a" style="left:463px;top:131px;width:99px;height:13px;background:#98fb98"></div>
<div class="a" style="left:463px;top:144px;width:99px;height:1px;background:#e6e6e6"></div>
<div class="t" style="left:469px;top:133px;font-size:11px;line-height:11px;color:#000;transform:scaleY(1.125);transform-origin:0 9px;">TD01</div>
<div class="a" style="left:563px;top:131px;width:63px;height:13px;background:#98fb98"></div>
<div class="a" style="left:563px;top:144px;width:63px;height:1px;background:#e6e6e6"></div>
<div class="t" style="left:568px;top:133px;font-size:11px;line-height:11px;color:#000;transform:scaleY(1.125);transform-origin:0 9px;">FPR12</div>
<div class="a" style="left:627px;top:131px;width:99px;height:13px;background:#98fb98"></div>
<div class="a" style="left:627px;top:144px;width:99px;height:1px;background:#e6e6e6"></div>
<div class="t" style="left:627px;top:133px;font-size:11px;line-height:11px;color:#000;width:99px;overflow:hidden;text-align:center;transform:scaleY(1.125);transform-origin:0 9px;letter-spacing:0.55px;">13/11/2018</div>
<div class="a" style="left:727px;top:131px;width:99px;height:13px;background:#98fb98"></div>
<div class="a" style="left:727px;top:144px;width:99px;height:1px;background:#e6e6e6"></div>
<div class="t" style="left:727px;top:133px;font-size:11px;line-height:11px;color:#000;width:99px;overflow:hidden;text-align:center;transform:scaleY(1.125);transform-origin:0 9px;letter-spacing:0.55px;">13/11/2018</div>
<div class="a" style="left:827px;top:131px;width:99px;height:13px;background:#98fb98"></div>
<div class="a" style="left:827px;top:144px;width:99px;height:1px;background:#e6e6e6"></div>
<div class="t" style="left:827px;top:133px;font-size:11px;line-height:11px;color:#000;width:99px;overflow:hidden;text-align:center;transform:scaleY(1.125);transform-origin:0 9px;letter-spacing:0.55px;">13/11/2018</div>
<div class="a" style="left:927px;top:131px;width:99px;height:13px;background:#98fb98"></div>
<div class="a" style="left:927px;top:144px;width:99px;height:1px;background:#e6e6e6"></div>
<div class="t" style="left:927px;top:133px;font-size:11px;line-height:11px;color:#000;width:99px;overflow:hidden;text-align:center;transform:scaleY(1.125);transform-origin:0 9px;letter-spacing:0.55px;">13/11/2018</div>
<div class="a" style="left:2px;top:145px;width:98px;height:13px;background:#98fb98"></div>
<div class="a" style="left:2px;top:158px;width:98px;height:1px;background:#e6e6e6"></div>
<div class="t" style="left:4px;top:147px;font-size:11px;line-height:11px;color:#000;transform:scaleY(1.125);transform-origin:0 9px;letter-spacing:0.55px;">13/11/2018</div>
<div class="a" style="left:101px;top:145px;width:113px;height:13px;background:#98fb98"></div>
<div class="a" style="left:101px;top:158px;width:113px;height:1px;background:#e6e6e6"></div>
<div class="t" style="left:101px;top:147px;font-size:11px;line-height:11px;color:#000;width:113px;overflow:hidden;text-align:center;transform:scaleY(1.125);transform-origin:0 9px;letter-spacing:0.55px;">13/11/2018</div>
<div class="a" style="left:215px;top:145px;width:115px;height:13px;background:#98fb98"></div>
<div class="a" style="left:215px;top:158px;width:115px;height:1px;background:#e6e6e6"></div>
<div class="t" style="left:220px;top:147px;font-size:11px;line-height:11px;color:#000;transform:scaleY(1.125);transform-origin:0 9px;">2018-10-31</div>
<div class="a" style="left:331px;top:145px;width:131px;height:13px;background:#98fb98"></div>
<div class="a" style="left:331px;top:158px;width:131px;height:1px;background:#e6e6e6"></div>
<div class="t" style="left:336px;top:147px;font-size:11px;line-height:11px;color:#000;transform:scaleY(1.125);transform-origin:0 9px;">FV2B_201800087</div>
<div class="a" style="left:463px;top:145px;width:99px;height:13px;background:#98fb98"></div>
<div class="a" style="left:463px;top:158px;width:99px;height:1px;background:#e6e6e6"></div>
<div class="t" style="left:469px;top:147px;font-size:11px;line-height:11px;color:#000;transform:scaleY(1.125);transform-origin:0 9px;">TD01</div>
<div class="a" style="left:563px;top:145px;width:63px;height:13px;background:#98fb98"></div>
<div class="a" style="left:563px;top:158px;width:63px;height:1px;background:#e6e6e6"></div>
<div class="t" style="left:568px;top:147px;font-size:11px;line-height:11px;color:#000;transform:scaleY(1.125);transform-origin:0 9px;">FPR12</div>
<div class="a" style="left:627px;top:145px;width:99px;height:13px;background:#98fb98"></div>
<div class="a" style="left:627px;top:158px;width:99px;height:1px;background:#e6e6e6"></div>
<div class="t" style="left:627px;top:147px;font-size:11px;line-height:11px;color:#000;width:99px;overflow:hidden;text-align:center;transform:scaleY(1.125);transform-origin:0 9px;letter-spacing:0.55px;">13/11/2018</div>
<div class="a" style="left:727px;top:145px;width:99px;height:13px;background:#98fb98"></div>
<div class="a" style="left:727px;top:158px;width:99px;height:1px;background:#e6e6e6"></div>
<div class="t" style="left:727px;top:147px;font-size:11px;line-height:11px;color:#000;width:99px;overflow:hidden;text-align:center;transform:scaleY(1.125);transform-origin:0 9px;letter-spacing:0.55px;">13/11/2018</div>
<div class="a" style="left:827px;top:145px;width:99px;height:13px;background:#98fb98"></div>
<div class="a" style="left:827px;top:158px;width:99px;height:1px;background:#e6e6e6"></div>
<div class="t" style="left:827px;top:147px;font-size:11px;line-height:11px;color:#000;width:99px;overflow:hidden;text-align:center;transform:scaleY(1.125);transform-origin:0 9px;letter-spacing:0.55px;">13/11/2018</div>
<div class="a" style="left:927px;top:145px;width:99px;height:13px;background:#98fb98"></div>
<div class="a" style="left:927px;top:158px;width:99px;height:1px;background:#e6e6e6"></div>
<div class="t" style="left:927px;top:147px;font-size:11px;line-height:11px;color:#000;width:99px;overflow:hidden;text-align:center;transform:scaleY(1.125);transform-origin:0 9px;letter-spacing:0.55px;">13/11/2018</div>
<div class="a" style="left:2px;top:159px;width:98px;height:13px;background:#98fb98"></div>
<div class="a" style="left:2px;top:172px;width:98px;height:1px;background:#e6e6e6"></div>
<div class="t" style="left:4px;top:161px;font-size:11px;line-height:11px;color:#000;transform:scaleY(1.125);transform-origin:0 9px;letter-spacing:0.55px;">13/11/2018</div>
<div class="a" style="left:101px;top:159px;width:113px;height:13px;background:#98fb98"></div>
<div class="a" style="left:101px;top:172px;width:113px;height:1px;background:#e6e6e6"></div>
<div class="t" style="left:101px;top:161px;font-size:11px;line-height:11px;color:#000;width:113px;overflow:hidden;text-align:center;transform:scaleY(1.125);transform-origin:0 9px;letter-spacing:0.55px;">13/11/2018</div>
<div class="a" style="left:215px;top:159px;width:115px;height:13px;background:#98fb98"></div>
<div class="a" style="left:215px;top:172px;width:115px;height:1px;background:#e6e6e6"></div>
<div class="t" style="left:220px;top:161px;font-size:11px;line-height:11px;color:#000;transform:scaleY(1.125);transform-origin:0 9px;">2018-10-31</div>
<div class="a" style="left:331px;top:159px;width:131px;height:13px;background:#98fb98"></div>
<div class="a" style="left:331px;top:172px;width:131px;height:1px;background:#e6e6e6"></div>
<div class="t" style="left:336px;top:161px;font-size:11px;line-height:11px;color:#000;transform:scaleY(1.125);transform-origin:0 9px;">FV2B_201800088</div>
<div class="a" style="left:463px;top:159px;width:99px;height:13px;background:#98fb98"></div>
<div class="a" style="left:463px;top:172px;width:99px;height:1px;background:#e6e6e6"></div>
<div class="t" style="left:469px;top:161px;font-size:11px;line-height:11px;color:#000;transform:scaleY(1.125);transform-origin:0 9px;">TD01</div>
<div class="a" style="left:563px;top:159px;width:63px;height:13px;background:#98fb98"></div>
<div class="a" style="left:563px;top:172px;width:63px;height:1px;background:#e6e6e6"></div>
<div class="t" style="left:568px;top:161px;font-size:11px;line-height:11px;color:#000;transform:scaleY(1.125);transform-origin:0 9px;">FPR12</div>
<div class="a" style="left:627px;top:159px;width:99px;height:13px;background:#98fb98"></div>
<div class="a" style="left:627px;top:172px;width:99px;height:1px;background:#e6e6e6"></div>
<div class="t" style="left:627px;top:161px;font-size:11px;line-height:11px;color:#000;width:99px;overflow:hidden;text-align:center;transform:scaleY(1.125);transform-origin:0 9px;letter-spacing:0.55px;">13/11/2018</div>
<div class="a" style="left:727px;top:159px;width:99px;height:13px;background:#98fb98"></div>
<div class="a" style="left:727px;top:172px;width:99px;height:1px;background:#e6e6e6"></div>
<div class="t" style="left:727px;top:161px;font-size:11px;line-height:11px;color:#000;width:99px;overflow:hidden;text-align:center;transform:scaleY(1.125);transform-origin:0 9px;letter-spacing:0.55px;">13/11/2018</div>
<div class="a" style="left:827px;top:159px;width:99px;height:13px;background:#98fb98"></div>
<div class="a" style="left:827px;top:172px;width:99px;height:1px;background:#e6e6e6"></div>
<div class="t" style="left:827px;top:161px;font-size:11px;line-height:11px;color:#000;width:99px;overflow:hidden;text-align:center;transform:scaleY(1.125);transform-origin:0 9px;letter-spacing:0.55px;">13/11/2018</div>
<div class="a" style="left:927px;top:159px;width:99px;height:13px;background:#98fb98"></div>
<div class="a" style="left:927px;top:172px;width:99px;height:1px;background:#e6e6e6"></div>
<div class="t" style="left:927px;top:161px;font-size:11px;line-height:11px;color:#000;width:99px;overflow:hidden;text-align:center;transform:scaleY(1.125);transform-origin:0 9px;letter-spacing:0.55px;">13/11/2018</div>
<div class="a" style="left:2px;top:173px;width:98px;height:13px;background:#98fb98"></div>
<div class="a" style="left:2px;top:186px;width:98px;height:1px;background:#e6e6e6"></div>
<div class="t" style="left:4px;top:175px;font-size:11px;line-height:11px;color:#000;transform:scaleY(1.125);transform-origin:0 9px;letter-spacing:0.55px;">13/11/2018</div>
<div class="a" style="left:101px;top:173px;width:113px;height:13px;background:#98fb98"></div>
<div class="a" style="left:101px;top:186px;width:113px;height:1px;background:#e6e6e6"></div>
<div class="t" style="left:101px;top:175px;font-size:11px;line-height:11px;color:#000;width:113px;overflow:hidden;text-align:center;transform:scaleY(1.125);transform-origin:0 9px;letter-spacing:0.55px;">13/11/2018</div>
<div class="a" style="left:215px;top:173px;width:115px;height:13px;background:#98fb98"></div>
<div class="a" style="left:215px;top:186px;width:115px;height:1px;background:#e6e6e6"></div>
<div class="t" style="left:220px;top:175px;font-size:11px;line-height:11px;color:#000;transform:scaleY(1.125);transform-origin:0 9px;">2018-10-31</div>
<div class="a" style="left:331px;top:173px;width:131px;height:13px;background:#98fb98"></div>
<div class="a" style="left:331px;top:186px;width:131px;height:1px;background:#e6e6e6"></div>
<div class="t" style="left:336px;top:175px;font-size:11px;line-height:11px;color:#000;transform:scaleY(1.125);transform-origin:0 9px;">FV2B_201800089</div>
<div class="a" style="left:463px;top:173px;width:99px;height:13px;background:#98fb98"></div>
<div class="a" style="left:463px;top:186px;width:99px;height:1px;background:#e6e6e6"></div>
<div class="t" style="left:469px;top:175px;font-size:11px;line-height:11px;color:#000;transform:scaleY(1.125);transform-origin:0 9px;">TD01</div>
<div class="a" style="left:563px;top:173px;width:63px;height:13px;background:#98fb98"></div>
<div class="a" style="left:563px;top:186px;width:63px;height:1px;background:#e6e6e6"></div>
<div class="t" style="left:568px;top:175px;font-size:11px;line-height:11px;color:#000;transform:scaleY(1.125);transform-origin:0 9px;">FPR12</div>
<div class="a" style="left:627px;top:173px;width:99px;height:13px;background:#98fb98"></div>
<div class="a" style="left:627px;top:186px;width:99px;height:1px;background:#e6e6e6"></div>
<div class="t" style="left:627px;top:175px;font-size:11px;line-height:11px;color:#000;width:99px;overflow:hidden;text-align:center;transform:scaleY(1.125);transform-origin:0 9px;letter-spacing:0.55px;">13/11/2018</div>
<div class="a" style="left:727px;top:173px;width:99px;height:13px;background:#98fb98"></div>
<div class="a" style="left:727px;top:186px;width:99px;height:1px;background:#e6e6e6"></div>
<div class="t" style="left:727px;top:175px;font-size:11px;line-height:11px;color:#000;width:99px;overflow:hidden;text-align:center;transform:scaleY(1.125);transform-origin:0 9px;letter-spacing:0.55px;">13/11/2018</div>
<div class="a" style="left:827px;top:173px;width:99px;height:13px;background:#98fb98"></div>
<div class="a" style="left:827px;top:186px;width:99px;height:1px;background:#e6e6e6"></div>
<div class="t" style="left:827px;top:175px;font-size:11px;line-height:11px;color:#000;width:99px;overflow:hidden;text-align:center;transform:scaleY(1.125);transform-origin:0 9px;letter-spacing:0.55px;">13/11/2018</div>
<div class="a" style="left:927px;top:173px;width:99px;height:13px;background:#98fb98"></div>
<div class="a" style="left:927px;top:186px;width:99px;height:1px;background:#e6e6e6"></div>
<div class="t" style="left:927px;top:175px;font-size:11px;line-height:11px;color:#000;width:99px;overflow:hidden;text-align:center;transform:scaleY(1.125);transform-origin:0 9px;letter-spacing:0.55px;">13/11/2018</div>
<div class="a" style="left:2px;top:187px;width:98px;height:13px;background:#98fb98"></div>
<div class="a" style="left:2px;top:200px;width:98px;height:1px;background:#e6e6e6"></div>
<div class="t" style="left:4px;top:189px;font-size:11px;line-height:11px;color:#000;transform:scaleY(1.125);transform-origin:0 9px;letter-spacing:0.55px;">13/11/2018</div>
<div class="a" style="left:101px;top:187px;width:113px;height:13px;background:#98fb98"></div>
<div class="a" style="left:101px;top:200px;width:113px;height:1px;background:#e6e6e6"></div>
<div class="t" style="left:101px;top:189px;font-size:11px;line-height:11px;color:#000;width:113px;overflow:hidden;text-align:center;transform:scaleY(1.125);transform-origin:0 9px;letter-spacing:0.55px;">13/11/2018</div>
<div class="a" style="left:215px;top:187px;width:115px;height:13px;background:#98fb98"></div>
<div class="a" style="left:215px;top:200px;width:115px;height:1px;background:#e6e6e6"></div>
<div class="t" style="left:220px;top:189px;font-size:11px;line-height:11px;color:#000;transform:scaleY(1.125);transform-origin:0 9px;">2018-10-31</div>
<div class="a" style="left:331px;top:187px;width:131px;height:13px;background:#98fb98"></div>
<div class="a" style="left:331px;top:200px;width:131px;height:1px;background:#e6e6e6"></div>
<div class="t" style="left:336px;top:189px;font-size:11px;line-height:11px;color:#000;transform:scaleY(1.125);transform-origin:0 9px;">FV2B_201800090</div>
<div class="a" style="left:463px;top:187px;width:99px;height:13px;background:#98fb98"></div>
<div class="a" style="left:463px;top:200px;width:99px;height:1px;background:#e6e6e6"></div>
<div class="t" style="left:469px;top:189px;font-size:11px;line-height:11px;color:#000;transform:scaleY(1.125);transform-origin:0 9px;">TD01</div>
<div class="a" style="left:563px;top:187px;width:63px;height:13px;background:#98fb98"></div>
<div class="a" style="left:563px;top:200px;width:63px;height:1px;background:#e6e6e6"></div>
<div class="t" style="left:568px;top:189px;font-size:11px;line-height:11px;color:#000;transform:scaleY(1.125);transform-origin:0 9px;">FPR12</div>
<div class="a" style="left:627px;top:187px;width:99px;height:13px;background:#98fb98"></div>
<div class="a" style="left:627px;top:200px;width:99px;height:1px;background:#e6e6e6"></div>
<div class="t" style="left:627px;top:189px;font-size:11px;line-height:11px;color:#000;width:99px;overflow:hidden;text-align:center;transform:scaleY(1.125);transform-origin:0 9px;letter-spacing:0.55px;">13/11/2018</div>
<div class="a" style="left:727px;top:187px;width:99px;height:13px;background:#98fb98"></div>
<div class="a" style="left:727px;top:200px;width:99px;height:1px;background:#e6e6e6"></div>
<div class="t" style="left:727px;top:189px;font-size:11px;line-height:11px;color:#000;width:99px;overflow:hidden;text-align:center;transform:scaleY(1.125);transform-origin:0 9px;letter-spacing:0.55px;">13/11/2018</div>
<div class="a" style="left:827px;top:187px;width:99px;height:13px;background:#98fb98"></div>
<div class="a" style="left:827px;top:200px;width:99px;height:1px;background:#e6e6e6"></div>
<div class="t" style="left:827px;top:189px;font-size:11px;line-height:11px;color:#000;width:99px;overflow:hidden;text-align:center;transform:scaleY(1.125);transform-origin:0 9px;letter-spacing:0.55px;">13/11/2018</div>
<div class="a" style="left:927px;top:187px;width:99px;height:13px;background:#98fb98"></div>
<div class="a" style="left:927px;top:200px;width:99px;height:1px;background:#e6e6e6"></div>
<div class="t" style="left:927px;top:189px;font-size:11px;line-height:11px;color:#000;width:99px;overflow:hidden;text-align:center;transform:scaleY(1.125);transform-origin:0 9px;letter-spacing:0.55px;">13/11/2018</div>
<div class="a" style="left:2px;top:201px;width:98px;height:13px;background:#98fb98"></div>
<div class="a" style="left:2px;top:214px;width:98px;height:1px;background:#e6e6e6"></div>
<div class="t" style="left:4px;top:203px;font-size:11px;line-height:11px;color:#000;transform:scaleY(1.125);transform-origin:0 9px;letter-spacing:0.55px;">13/11/2018</div>
<div class="a" style="left:101px;top:201px;width:113px;height:13px;background:#98fb98"></div>
<div class="a" style="left:101px;top:214px;width:113px;height:1px;background:#e6e6e6"></div>
<div class="t" style="left:101px;top:203px;font-size:11px;line-height:11px;color:#000;width:113px;overflow:hidden;text-align:center;transform:scaleY(1.125);transform-origin:0 9px;letter-spacing:0.55px;">13/11/2018</div>
<div class="a" style="left:215px;top:201px;width:115px;height:13px;background:#98fb98"></div>
<div class="a" style="left:215px;top:214px;width:115px;height:1px;background:#e6e6e6"></div>
<div class="t" style="left:220px;top:203px;font-size:11px;line-height:11px;color:#000;transform:scaleY(1.125);transform-origin:0 9px;">2018-10-31</div>
<div class="a" style="left:331px;top:201px;width:131px;height:13px;background:#98fb98"></div>
<div class="a" style="left:331px;top:214px;width:131px;height:1px;background:#e6e6e6"></div>
<div class="t" style="left:336px;top:203px;font-size:11px;line-height:11px;color:#000;transform:scaleY(1.125);transform-origin:0 9px;">FV2B_201800091</div>
<div class="a" style="left:463px;top:201px;width:99px;height:13px;background:#98fb98"></div>
<div class="a" style="left:463px;top:214px;width:99px;height:1px;background:#e6e6e6"></div>
<div class="t" style="left:469px;top:203px;font-size:11px;line-height:11px;color:#000;transform:scaleY(1.125);transform-origin:0 9px;">TD01</div>
<div class="a" style="left:563px;top:201px;width:63px;height:13px;background:#98fb98"></div>
<div class="a" style="left:563px;top:214px;width:63px;height:1px;background:#e6e6e6"></div>
<div class="t" style="left:568px;top:203px;font-size:11px;line-height:11px;color:#000;transform:scaleY(1.125);transform-origin:0 9px;">FPR12</div>
<div class="a" style="left:627px;top:201px;width:99px;height:13px;background:#98fb98"></div>
<div class="a" style="left:627px;top:214px;width:99px;height:1px;background:#e6e6e6"></div>
<div class="t" style="left:627px;top:203px;font-size:11px;line-height:11px;color:#000;width:99px;overflow:hidden;text-align:center;transform:scaleY(1.125);transform-origin:0 9px;letter-spacing:0.55px;">13/11/2018</div>
<div class="a" style="left:727px;top:201px;width:99px;height:13px;background:#98fb98"></div>
<div class="a" style="left:727px;top:214px;width:99px;height:1px;background:#e6e6e6"></div>
<div class="t" style="left:727px;top:203px;font-size:11px;line-height:11px;color:#000;width:99px;overflow:hidden;text-align:center;transform:scaleY(1.125);transform-origin:0 9px;letter-spacing:0.55px;">13/11/2018</div>
<div class="a" style="left:827px;top:201px;width:99px;height:13px;background:#98fb98"></div>
<div class="a" style="left:827px;top:214px;width:99px;height:1px;background:#e6e6e6"></div>
<div class="t" style="left:827px;top:203px;font-size:11px;line-height:11px;color:#000;width:99px;overflow:hidden;text-align:center;transform:scaleY(1.125);transform-origin:0 9px;letter-spacing:0.55px;">13/11/2018</div>
<div class="a" style="left:927px;top:201px;width:99px;height:13px;background:#98fb98"></div>
<div class="a" style="left:927px;top:214px;width:99px;height:1px;background:#e6e6e6"></div>
<div class="t" style="left:927px;top:203px;font-size:11px;line-height:11px;color:#000;width:99px;overflow:hidden;text-align:center;transform:scaleY(1.125);transform-origin:0 9px;letter-spacing:0.55px;">13/11/2018</div>
<div class="a" style="left:2px;top:215px;width:98px;height:13px;background:#98fb98"></div>
<div class="a" style="left:2px;top:228px;width:98px;height:1px;background:#e6e6e6"></div>
<div class="t" style="left:4px;top:217px;font-size:11px;line-height:11px;color:#000;transform:scaleY(1.125);transform-origin:0 9px;letter-spacing:0.55px;">13/11/2018</div>
<div class="a" style="left:101px;top:215px;width:113px;height:13px;background:#98fb98"></div>
<div class="a" style="left:101px;top:228px;width:113px;height:1px;background:#e6e6e6"></div>
<div class="t" style="left:101px;top:217px;font-size:11px;line-height:11px;color:#000;width:113px;overflow:hidden;text-align:center;transform:scaleY(1.125);transform-origin:0 9px;letter-spacing:0.55px;">13/11/2018</div>
<div class="a" style="left:215px;top:215px;width:115px;height:13px;background:#98fb98"></div>
<div class="a" style="left:215px;top:228px;width:115px;height:1px;background:#e6e6e6"></div>
<div class="t" style="left:220px;top:217px;font-size:11px;line-height:11px;color:#000;transform:scaleY(1.125);transform-origin:0 9px;">2018-10-31</div>
<div class="a" style="left:331px;top:215px;width:131px;height:13px;background:#98fb98"></div>
<div class="a" style="left:331px;top:228px;width:131px;height:1px;background:#e6e6e6"></div>
<div class="t" style="left:336px;top:217px;font-size:11px;line-height:11px;color:#000;transform:scaleY(1.125);transform-origin:0 9px;">FV2B_201800092</div>
<div class="a" style="left:463px;top:215px;width:99px;height:13px;background:#98fb98"></div>
<div class="a" style="left:463px;top:228px;width:99px;height:1px;background:#e6e6e6"></div>
<div class="t" style="left:469px;top:217px;font-size:11px;line-height:11px;color:#000;transform:scaleY(1.125);transform-origin:0 9px;">TD01</div>
<div class="a" style="left:563px;top:215px;width:63px;height:13px;background:#98fb98"></div>
<div class="a" style="left:563px;top:228px;width:63px;height:1px;background:#e6e6e6"></div>
<div class="t" style="left:568px;top:217px;font-size:11px;line-height:11px;color:#000;transform:scaleY(1.125);transform-origin:0 9px;">FPR12</div>
<div class="a" style="left:627px;top:215px;width:99px;height:13px;background:#98fb98"></div>
<div class="a" style="left:627px;top:228px;width:99px;height:1px;background:#e6e6e6"></div>
<div class="t" style="left:627px;top:217px;font-size:11px;line-height:11px;color:#000;width:99px;overflow:hidden;text-align:center;transform:scaleY(1.125);transform-origin:0 9px;letter-spacing:0.55px;">13/11/2018</div>
<div class="a" style="left:727px;top:215px;width:99px;height:13px;background:#98fb98"></div>
<div class="a" style="left:727px;top:228px;width:99px;height:1px;background:#e6e6e6"></div>
<div class="t" style="left:727px;top:217px;font-size:11px;line-height:11px;color:#000;width:99px;overflow:hidden;text-align:center;transform:scaleY(1.125);transform-origin:0 9px;letter-spacing:0.55px;">13/11/2018</div>
<div class="a" style="left:827px;top:215px;width:99px;height:13px;background:#98fb98"></div>
<div class="a" style="left:827px;top:228px;width:99px;height:1px;background:#e6e6e6"></div>
<div class="t" style="left:827px;top:217px;font-size:11px;line-height:11px;color:#000;width:99px;overflow:hidden;text-align:center;transform:scaleY(1.125);transform-origin:0 9px;letter-spacing:0.55px;">13/11/2018</div>
<div class="a" style="left:927px;top:215px;width:99px;height:13px;background:#98fb98"></div>
<div class="a" style="left:927px;top:228px;width:99px;height:1px;background:#e6e6e6"></div>
<div class="t" style="left:927px;top:217px;font-size:11px;line-height:11px;color:#000;width:99px;overflow:hidden;text-align:center;transform:scaleY(1.125);transform-origin:0 9px;letter-spacing:0.55px;">13/11/2018</div>
<div class="a" style="left:2px;top:229px;width:98px;height:13px;background:#98fb98"></div>
<div class="a" style="left:2px;top:242px;width:98px;height:1px;background:#e6e6e6"></div>
<div class="t" style="left:4px;top:231px;font-size:11px;line-height:11px;color:#000;transform:scaleY(1.125);transform-origin:0 9px;letter-spacing:0.55px;">13/11/2018</div>
<div class="a" style="left:101px;top:229px;width:113px;height:13px;background:#98fb98"></div>
<div class="a" style="left:101px;top:242px;width:113px;height:1px;background:#e6e6e6"></div>
<div class="t" style="left:101px;top:231px;font-size:11px;line-height:11px;color:#000;width:113px;overflow:hidden;text-align:center;transform:scaleY(1.125);transform-origin:0 9px;letter-spacing:0.55px;">13/11/2018</div>
<div class="a" style="left:215px;top:229px;width:115px;height:13px;background:#98fb98"></div>
<div class="a" style="left:215px;top:242px;width:115px;height:1px;background:#e6e6e6"></div>
<div class="t" style="left:220px;top:231px;font-size:11px;line-height:11px;color:#000;transform:scaleY(1.125);transform-origin:0 9px;">2018-10-31</div>
<div class="a" style="left:331px;top:229px;width:131px;height:13px;background:#98fb98"></div>
<div class="a" style="left:331px;top:242px;width:131px;height:1px;background:#e6e6e6"></div>
<div class="t" style="left:336px;top:231px;font-size:11px;line-height:11px;color:#000;transform:scaleY(1.125);transform-origin:0 9px;">FV2B_201800093</div>
<div class="a" style="left:463px;top:229px;width:99px;height:13px;background:#98fb98"></div>
<div class="a" style="left:463px;top:242px;width:99px;height:1px;background:#e6e6e6"></div>
<div class="t" style="left:469px;top:231px;font-size:11px;line-height:11px;color:#000;transform:scaleY(1.125);transform-origin:0 9px;">TD01</div>
<div class="a" style="left:563px;top:229px;width:63px;height:13px;background:#98fb98"></div>
<div class="a" style="left:563px;top:242px;width:63px;height:1px;background:#e6e6e6"></div>
<div class="t" style="left:568px;top:231px;font-size:11px;line-height:11px;color:#000;transform:scaleY(1.125);transform-origin:0 9px;">FPR12</div>
<div class="a" style="left:627px;top:229px;width:99px;height:13px;background:#98fb98"></div>
<div class="a" style="left:627px;top:242px;width:99px;height:1px;background:#e6e6e6"></div>
<div class="t" style="left:627px;top:231px;font-size:11px;line-height:11px;color:#000;width:99px;overflow:hidden;text-align:center;transform:scaleY(1.125);transform-origin:0 9px;letter-spacing:0.55px;">13/11/2018</div>
<div class="a" style="left:727px;top:229px;width:99px;height:13px;background:#98fb98"></div>
<div class="a" style="left:727px;top:242px;width:99px;height:1px;background:#e6e6e6"></div>
<div class="t" style="left:727px;top:231px;font-size:11px;line-height:11px;color:#000;width:99px;overflow:hidden;text-align:center;transform:scaleY(1.125);transform-origin:0 9px;letter-spacing:0.55px;">13/11/2018</div>
<div class="a" style="left:827px;top:229px;width:99px;height:13px;background:#98fb98"></div>
<div class="a" style="left:827px;top:242px;width:99px;height:1px;background:#e6e6e6"></div>
<div class="t" style="left:827px;top:231px;font-size:11px;line-height:11px;color:#000;width:99px;overflow:hidden;text-align:center;transform:scaleY(1.125);transform-origin:0 9px;letter-spacing:0.55px;">13/11/2018</div>
<div class="a" style="left:927px;top:229px;width:99px;height:13px;background:#98fb98"></div>
<div class="a" style="left:927px;top:242px;width:99px;height:1px;background:#e6e6e6"></div>
<div class="t" style="left:927px;top:231px;font-size:11px;line-height:11px;color:#000;width:99px;overflow:hidden;text-align:center;transform:scaleY(1.125);transform-origin:0 9px;letter-spacing:0.55px;">13/11/2018</div>
<div class="a" style="left:2px;top:243px;width:98px;height:13px;background:#98fb98"></div>
<div class="a" style="left:2px;top:256px;width:98px;height:1px;background:#e6e6e6"></div>
<div class="t" style="left:4px;top:245px;font-size:11px;line-height:11px;color:#000;transform:scaleY(1.125);transform-origin:0 9px;letter-spacing:0.55px;">13/11/2018</div>
<div class="a" style="left:101px;top:243px;width:113px;height:13px;background:#98fb98"></div>
<div class="a" style="left:101px;top:256px;width:113px;height:1px;background:#e6e6e6"></div>
<div class="t" style="left:101px;top:245px;font-size:11px;line-height:11px;color:#000;width:113px;overflow:hidden;text-align:center;transform:scaleY(1.125);transform-origin:0 9px;letter-spacing:0.55px;">13/11/2018</div>
<div class="a" style="left:215px;top:243px;width:115px;height:13px;background:#98fb98"></div>
<div class="a" style="left:215px;top:256px;width:115px;height:1px;background:#e6e6e6"></div>
<div class="t" style="left:220px;top:245px;font-size:11px;line-height:11px;color:#000;transform:scaleY(1.125);transform-origin:0 9px;">2018-10-31</div>
<div class="a" style="left:331px;top:243px;width:131px;height:13px;background:#98fb98"></div>
<div class="a" style="left:331px;top:256px;width:131px;height:1px;background:#e6e6e6"></div>
<div class="t" style="left:336px;top:245px;font-size:11px;line-height:11px;color:#000;transform:scaleY(1.125);transform-origin:0 9px;">FV2B_201800094</div>
<div class="a" style="left:463px;top:243px;width:99px;height:13px;background:#98fb98"></div>
<div class="a" style="left:463px;top:256px;width:99px;height:1px;background:#e6e6e6"></div>
<div class="t" style="left:469px;top:245px;font-size:11px;line-height:11px;color:#000;transform:scaleY(1.125);transform-origin:0 9px;">TD01</div>
<div class="a" style="left:563px;top:243px;width:63px;height:13px;background:#98fb98"></div>
<div class="a" style="left:563px;top:256px;width:63px;height:1px;background:#e6e6e6"></div>
<div class="t" style="left:568px;top:245px;font-size:11px;line-height:11px;color:#000;transform:scaleY(1.125);transform-origin:0 9px;">FPR12</div>
<div class="a" style="left:627px;top:243px;width:99px;height:13px;background:#98fb98"></div>
<div class="a" style="left:627px;top:256px;width:99px;height:1px;background:#e6e6e6"></div>
<div class="t" style="left:627px;top:245px;font-size:11px;line-height:11px;color:#000;width:99px;overflow:hidden;text-align:center;transform:scaleY(1.125);transform-origin:0 9px;letter-spacing:0.55px;">13/11/2018</div>
<div class="a" style="left:727px;top:243px;width:99px;height:13px;background:#98fb98"></div>
<div class="a" style="left:727px;top:256px;width:99px;height:1px;background:#e6e6e6"></div>
<div class="t" style="left:727px;top:245px;font-size:11px;line-height:11px;color:#000;width:99px;overflow:hidden;text-align:center;transform:scaleY(1.125);transform-origin:0 9px;letter-spacing:0.55px;">13/11/2018</div>
<div class="a" style="left:827px;top:243px;width:99px;height:13px;background:#98fb98"></div>
<div class="a" style="left:827px;top:256px;width:99px;height:1px;background:#e6e6e6"></div>
<div class="t" style="left:827px;top:245px;font-size:11px;line-height:11px;color:#000;width:99px;overflow:hidden;text-align:center;transform:scaleY(1.125);transform-origin:0 9px;letter-spacing:0.55px;">13/11/2018</div>
<div class="a" style="left:927px;top:243px;width:99px;height:13px;background:#98fb98"></div>
<div class="a" style="left:927px;top:256px;width:99px;height:1px;background:#e6e6e6"></div>
<div class="t" style="left:927px;top:245px;font-size:11px;line-height:11px;color:#000;width:99px;overflow:hidden;text-align:center;transform:scaleY(1.125);transform-origin:0 9px;letter-spacing:0.55px;">13/11/2018</div>
<div class="a" style="left:2px;top:257px;width:98px;height:13px;background:#98fb98"></div>
<div class="a" style="left:2px;top:270px;width:98px;height:1px;background:#e6e6e6"></div>
<div class="t" style="left:4px;top:259px;font-size:11px;line-height:11px;color:#000;transform:scaleY(1.125);transform-origin:0 9px;letter-spacing:0.55px;">13/11/2018</div>
<div class="a" style="left:101px;top:257px;width:113px;height:13px;background:#98fb98"></div>
<div class="a" style="left:101px;top:270px;width:113px;height:1px;background:#e6e6e6"></div>
<div class="t" style="left:101px;top:259px;font-size:11px;line-height:11px;color:#000;width:113px;overflow:hidden;text-align:center;transform:scaleY(1.125);transform-origin:0 9px;letter-spacing:0.55px;">13/11/2018</div>
<div class="a" style="left:215px;top:257px;width:115px;height:13px;background:#98fb98"></div>
<div class="a" style="left:215px;top:270px;width:115px;height:1px;background:#e6e6e6"></div>
<div class="t" style="left:220px;top:259px;font-size:11px;line-height:11px;color:#000;transform:scaleY(1.125);transform-origin:0 9px;">2018-10-31</div>
<div class="a" style="left:331px;top:257px;width:131px;height:13px;background:#98fb98"></div>
<div class="a" style="left:331px;top:270px;width:131px;height:1px;background:#e6e6e6"></div>
<div class="t" style="left:336px;top:259px;font-size:11px;line-height:11px;color:#000;transform:scaleY(1.125);transform-origin:0 9px;">FV2B_201800095</div>
<div class="a" style="left:463px;top:257px;width:99px;height:13px;background:#98fb98"></div>
<div class="a" style="left:463px;top:270px;width:99px;height:1px;background:#e6e6e6"></div>
<div class="t" style="left:469px;top:259px;font-size:11px;line-height:11px;color:#000;transform:scaleY(1.125);transform-origin:0 9px;">TD01</div>
<div class="a" style="left:563px;top:257px;width:63px;height:13px;background:#98fb98"></div>
<div class="a" style="left:563px;top:270px;width:63px;height:1px;background:#e6e6e6"></div>
<div class="t" style="left:568px;top:259px;font-size:11px;line-height:11px;color:#000;transform:scaleY(1.125);transform-origin:0 9px;">FPR12</div>
<div class="a" style="left:627px;top:257px;width:99px;height:13px;background:#98fb98"></div>
<div class="a" style="left:627px;top:270px;width:99px;height:1px;background:#e6e6e6"></div>
<div class="t" style="left:627px;top:259px;font-size:11px;line-height:11px;color:#000;width:99px;overflow:hidden;text-align:center;transform:scaleY(1.125);transform-origin:0 9px;letter-spacing:0.55px;">13/11/2018</div>
<div class="a" style="left:727px;top:257px;width:99px;height:13px;background:#98fb98"></div>
<div class="a" style="left:727px;top:270px;width:99px;height:1px;background:#e6e6e6"></div>
<div class="t" style="left:727px;top:259px;font-size:11px;line-height:11px;color:#000;width:99px;overflow:hidden;text-align:center;transform:scaleY(1.125);transform-origin:0 9px;letter-spacing:0.55px;">13/11/2018</div>
<div class="a" style="left:827px;top:257px;width:99px;height:13px;background:#98fb98"></div>
<div class="a" style="left:827px;top:270px;width:99px;height:1px;background:#e6e6e6"></div>
<div class="t" style="left:827px;top:259px;font-size:11px;line-height:11px;color:#000;width:99px;overflow:hidden;text-align:center;transform:scaleY(1.125);transform-origin:0 9px;letter-spacing:0.55px;">13/11/2018</div>
<div class="a" style="left:927px;top:257px;width:99px;height:13px;background:#98fb98"></div>
<div class="a" style="left:927px;top:270px;width:99px;height:1px;background:#e6e6e6"></div>
<div class="t" style="left:927px;top:259px;font-size:11px;line-height:11px;color:#000;width:99px;overflow:hidden;text-align:center;transform:scaleY(1.125);transform-origin:0 9px;letter-spacing:0.55px;">13/11/2018</div>
<div class="a" style="left:2px;top:271px;width:98px;height:13px;background:#98fb98"></div>
<div class="a" style="left:2px;top:284px;width:98px;height:1px;background:#e6e6e6"></div>
<div class="t" style="left:4px;top:273px;font-size:11px;line-height:11px;color:#000;transform:scaleY(1.125);transform-origin:0 9px;letter-spacing:0.55px;">13/11/2018</div>
<div class="a" style="left:101px;top:271px;width:113px;height:13px;background:#98fb98"></div>
<div class="a" style="left:101px;top:284px;width:113px;height:1px;background:#e6e6e6"></div>
<div class="t" style="left:101px;top:273px;font-size:11px;line-height:11px;color:#000;width:113px;overflow:hidden;text-align:center;transform:scaleY(1.125);transform-origin:0 9px;letter-spacing:0.55px;">13/11/2018</div>
<div class="a" style="left:215px;top:271px;width:115px;height:13px;background:#98fb98"></div>
<div class="a" style="left:215px;top:284px;width:115px;height:1px;background:#e6e6e6"></div>
<div class="t" style="left:220px;top:273px;font-size:11px;line-height:11px;color:#000;transform:scaleY(1.125);transform-origin:0 9px;">2018-10-31</div>
<div class="a" style="left:331px;top:271px;width:131px;height:13px;background:#98fb98"></div>
<div class="a" style="left:331px;top:284px;width:131px;height:1px;background:#e6e6e6"></div>
<div class="t" style="left:336px;top:273px;font-size:11px;line-height:11px;color:#000;transform:scaleY(1.125);transform-origin:0 9px;">FV2B_201800096</div>
<div class="a" style="left:463px;top:271px;width:99px;height:13px;background:#98fb98"></div>
<div class="a" style="left:463px;top:284px;width:99px;height:1px;background:#e6e6e6"></div>
<div class="t" style="left:469px;top:273px;font-size:11px;line-height:11px;color:#000;transform:scaleY(1.125);transform-origin:0 9px;">TD01</div>
<div class="a" style="left:563px;top:271px;width:63px;height:13px;background:#98fb98"></div>
<div class="a" style="left:563px;top:284px;width:63px;height:1px;background:#e6e6e6"></div>
<div class="t" style="left:568px;top:273px;font-size:11px;line-height:11px;color:#000;transform:scaleY(1.125);transform-origin:0 9px;">FPR12</div>
<div class="a" style="left:627px;top:271px;width:99px;height:13px;background:#98fb98"></div>
<div class="a" style="left:627px;top:284px;width:99px;height:1px;background:#e6e6e6"></div>
<div class="t" style="left:627px;top:273px;font-size:11px;line-height:11px;color:#000;width:99px;overflow:hidden;text-align:center;transform:scaleY(1.125);transform-origin:0 9px;letter-spacing:0.55px;">13/11/2018</div>
<div class="a" style="left:727px;top:271px;width:99px;height:13px;background:#98fb98"></div>
<div class="a" style="left:727px;top:284px;width:99px;height:1px;background:#e6e6e6"></div>
<div class="t" style="left:727px;top:273px;font-size:11px;line-height:11px;color:#000;width:99px;overflow:hidden;text-align:center;transform:scaleY(1.125);transform-origin:0 9px;letter-spacing:0.55px;">13/11/2018</div>
<div class="a" style="left:827px;top:271px;width:99px;height:13px;background:#98fb98"></div>
<div class="a" style="left:827px;top:284px;width:99px;height:1px;background:#e6e6e6"></div>
<div class="t" style="left:827px;top:273px;font-size:11px;line-height:11px;color:#000;width:99px;overflow:hidden;text-align:center;transform:scaleY(1.125);transform-origin:0 9px;letter-spacing:0.55px;">13/11/2018</div>
<div class="a" style="left:927px;top:271px;width:99px;height:13px;background:#98fb98"></div>
<div class="a" style="left:927px;top:284px;width:99px;height:1px;background:#e6e6e6"></div>
<div class="t" style="left:927px;top:273px;font-size:11px;line-height:11px;color:#000;width:99px;overflow:hidden;text-align:center;transform:scaleY(1.125);transform-origin:0 9px;letter-spacing:0.55px;">13/11/2018</div>
<div class="a" style="left:2px;top:285px;width:98px;height:13px;background:#98fb98"></div>
<div class="a" style="left:2px;top:298px;width:98px;height:1px;background:#e6e6e6"></div>
<div class="t" style="left:4px;top:287px;font-size:11px;line-height:11px;color:#000;transform:scaleY(1.125);transform-origin:0 9px;letter-spacing:0.55px;">13/11/2018</div>
<div class="a" style="left:101px;top:285px;width:113px;height:13px;background:#98fb98"></div>
<div class="a" style="left:101px;top:298px;width:113px;height:1px;background:#e6e6e6"></div>
<div class="t" style="left:101px;top:287px;font-size:11px;line-height:11px;color:#000;width:113px;overflow:hidden;text-align:center;transform:scaleY(1.125);transform-origin:0 9px;letter-spacing:0.55px;">13/11/2018</div>
<div class="a" style="left:215px;top:285px;width:115px;height:13px;background:#98fb98"></div>
<div class="a" style="left:215px;top:298px;width:115px;height:1px;background:#e6e6e6"></div>
<div class="t" style="left:220px;top:287px;font-size:11px;line-height:11px;color:#000;transform:scaleY(1.125);transform-origin:0 9px;">2018-10-31</div>
<div class="a" style="left:331px;top:285px;width:131px;height:13px;background:#98fb98"></div>
<div class="a" style="left:331px;top:298px;width:131px;height:1px;background:#e6e6e6"></div>
<div class="t" style="left:336px;top:287px;font-size:11px;line-height:11px;color:#000;transform:scaleY(1.125);transform-origin:0 9px;">FV2B_201800097</div>
<div class="a" style="left:463px;top:285px;width:99px;height:13px;background:#98fb98"></div>
<div class="a" style="left:463px;top:298px;width:99px;height:1px;background:#e6e6e6"></div>
<div class="t" style="left:469px;top:287px;font-size:11px;line-height:11px;color:#000;transform:scaleY(1.125);transform-origin:0 9px;">TD01</div>
<div class="a" style="left:563px;top:285px;width:63px;height:13px;background:#98fb98"></div>
<div class="a" style="left:563px;top:298px;width:63px;height:1px;background:#e6e6e6"></div>
<div class="t" style="left:568px;top:287px;font-size:11px;line-height:11px;color:#000;transform:scaleY(1.125);transform-origin:0 9px;">FPR12</div>
<div class="a" style="left:627px;top:285px;width:99px;height:13px;background:#98fb98"></div>
<div class="a" style="left:627px;top:298px;width:99px;height:1px;background:#e6e6e6"></div>
<div class="t" style="left:627px;top:287px;font-size:11px;line-height:11px;color:#000;width:99px;overflow:hidden;text-align:center;transform:scaleY(1.125);transform-origin:0 9px;letter-spacing:0.55px;">13/11/2018</div>
<div class="a" style="left:727px;top:285px;width:99px;height:13px;background:#98fb98"></div>
<div class="a" style="left:727px;top:298px;width:99px;height:1px;background:#e6e6e6"></div>
<div class="t" style="left:727px;top:287px;font-size:11px;line-height:11px;color:#000;width:99px;overflow:hidden;text-align:center;transform:scaleY(1.125);transform-origin:0 9px;letter-spacing:0.55px;">13/11/2018</div>
<div class="a" style="left:827px;top:285px;width:99px;height:13px;background:#98fb98"></div>
<div class="a" style="left:827px;top:298px;width:99px;height:1px;background:#e6e6e6"></div>
<div class="t" style="left:827px;top:287px;font-size:11px;line-height:11px;color:#000;width:99px;overflow:hidden;text-align:center;transform:scaleY(1.125);transform-origin:0 9px;letter-spacing:0.55px;">13/11/2018</div>
<div class="a" style="left:927px;top:285px;width:99px;height:13px;background:#98fb98"></div>
<div class="a" style="left:927px;top:298px;width:99px;height:1px;background:#e6e6e6"></div>
<div class="t" style="left:927px;top:287px;font-size:11px;line-height:11px;color:#000;width:99px;overflow:hidden;text-align:center;transform:scaleY(1.125);transform-origin:0 9px;letter-spacing:0.55px;">13/11/2018</div>
<div class="a" style="left:2px;top:299px;width:98px;height:13px;background:#98fb98"></div>
<div class="a" style="left:2px;top:312px;width:98px;height:1px;background:#e6e6e6"></div>
<div class="t" style="left:4px;top:301px;font-size:11px;line-height:11px;color:#000;transform:scaleY(1.125);transform-origin:0 9px;letter-spacing:0.55px;">13/11/2018</div>
<div class="a" style="left:101px;top:299px;width:113px;height:13px;background:#98fb98"></div>
<div class="a" style="left:101px;top:312px;width:113px;height:1px;background:#e6e6e6"></div>
<div class="t" style="left:101px;top:301px;font-size:11px;line-height:11px;color:#000;width:113px;overflow:hidden;text-align:center;transform:scaleY(1.125);transform-origin:0 9px;letter-spacing:0.55px;">13/11/2018</div>
<div class="a" style="left:215px;top:299px;width:115px;height:13px;background:#98fb98"></div>
<div class="a" style="left:215px;top:312px;width:115px;height:1px;background:#e6e6e6"></div>
<div class="t" style="left:220px;top:301px;font-size:11px;line-height:11px;color:#000;transform:scaleY(1.125);transform-origin:0 9px;">2018-10-31</div>
<div class="a" style="left:331px;top:299px;width:131px;height:13px;background:#98fb98"></div>
<div class="a" style="left:331px;top:312px;width:131px;height:1px;background:#e6e6e6"></div>
<div class="t" style="left:336px;top:301px;font-size:11px;line-height:11px;color:#000;transform:scaleY(1.125);transform-origin:0 9px;">FV2B_201800098</div>
<div class="a" style="left:463px;top:299px;width:99px;height:13px;background:#98fb98"></div>
<div class="a" style="left:463px;top:312px;width:99px;height:1px;background:#e6e6e6"></div>
<div class="t" style="left:469px;top:301px;font-size:11px;line-height:11px;color:#000;transform:scaleY(1.125);transform-origin:0 9px;">TD01</div>
<div class="a" style="left:563px;top:299px;width:63px;height:13px;background:#98fb98"></div>
<div class="a" style="left:563px;top:312px;width:63px;height:1px;background:#e6e6e6"></div>
<div class="t" style="left:568px;top:301px;font-size:11px;line-height:11px;color:#000;transform:scaleY(1.125);transform-origin:0 9px;">FPR12</div>
<div class="a" style="left:627px;top:299px;width:99px;height:13px;background:#98fb98"></div>
<div class="a" style="left:627px;top:312px;width:99px;height:1px;background:#e6e6e6"></div>
<div class="t" style="left:627px;top:301px;font-size:11px;line-height:11px;color:#000;width:99px;overflow:hidden;text-align:center;transform:scaleY(1.125);transform-origin:0 9px;letter-spacing:0.55px;">13/11/2018</div>
<div class="a" style="left:727px;top:299px;width:99px;height:13px;background:#98fb98"></div>
<div class="a" style="left:727px;top:312px;width:99px;height:1px;background:#e6e6e6"></div>
<div class="t" style="left:727px;top:301px;font-size:11px;line-height:11px;color:#000;width:99px;overflow:hidden;text-align:center;transform:scaleY(1.125);transform-origin:0 9px;letter-spacing:0.55px;">13/11/2018</div>
<div class="a" style="left:827px;top:299px;width:99px;height:13px;background:#98fb98"></div>
<div class="a" style="left:827px;top:312px;width:99px;height:1px;background:#e6e6e6"></div>
<div class="t" style="left:827px;top:301px;font-size:11px;line-height:11px;color:#000;width:99px;overflow:hidden;text-align:center;transform:scaleY(1.125);transform-origin:0 9px;letter-spacing:0.55px;">13/11/2018</div>
<div class="a" style="left:927px;top:299px;width:99px;height:13px;background:#98fb98"></div>
<div class="a" style="left:927px;top:312px;width:99px;height:1px;background:#e6e6e6"></div>
<div class="t" style="left:927px;top:301px;font-size:11px;line-height:11px;color:#000;width:99px;overflow:hidden;text-align:center;transform:scaleY(1.125);transform-origin:0 9px;letter-spacing:0.55px;">13/11/2018</div>
<div class="a" style="left:2px;top:326px;width:98px;height:1px;background:#e6e6e6"></div>
<div class="t" style="left:4px;top:315px;font-size:11px;line-height:11px;color:#000;transform:scaleY(1.125);transform-origin:0 9px;letter-spacing:0.55px;">14/11/2018</div>
<div class="a" style="left:101px;top:326px;width:113px;height:1px;background:#e6e6e6"></div>
<div class="t" style="left:101px;top:315px;font-size:11px;line-height:11px;color:#000;width:113px;overflow:hidden;text-align:center;transform:scaleY(1.125);transform-origin:0 9px;letter-spacing:0.55px;">01/01/2000</div>
<div class="a" style="left:215px;top:326px;width:115px;height:1px;background:#e6e6e6"></div>
<div class="t" style="left:220px;top:315px;font-size:11px;line-height:11px;color:#000;transform:scaleY(1.125);transform-origin:0 9px;">2018-11-13</div>
<div class="a" style="left:331px;top:326px;width:131px;height:1px;background:#e6e6e6"></div>
<div class="t" style="left:336px;top:315px;font-size:11px;line-height:11px;color:#000;transform:scaleY(1.125);transform-origin:0 9px;">FV2B_201800099</div>
<div class="a" style="left:463px;top:326px;width:99px;height:1px;background:#e6e6e6"></div>
<div class="t" style="left:469px;top:315px;font-size:11px;line-height:11px;color:#000;transform:scaleY(1.125);transform-origin:0 9px;">TD01</div>
<div class="a" style="left:563px;top:326px;width:63px;height:1px;background:#e6e6e6"></div>
<div class="t" style="left:568px;top:315px;font-size:11px;line-height:11px;color:#000;transform:scaleY(1.125);transform-origin:0 9px;">FPR12</div>
<div class="a" style="left:627px;top:326px;width:99px;height:1px;background:#e6e6e6"></div>
<div class="t" style="left:627px;top:315px;font-size:11px;line-height:11px;color:#000;width:99px;overflow:hidden;text-align:center;transform:scaleY(1.125);transform-origin:0 9px;letter-spacing:0.55px;">14/11/2018</div>
<div class="a" style="left:727px;top:326px;width:99px;height:1px;background:#e6e6e6"></div>
<div class="t" style="left:727px;top:315px;font-size:11px;line-height:11px;color:#000;width:99px;overflow:hidden;text-align:center;transform:scaleY(1.125);transform-origin:0 9px;letter-spacing:0.55px;">14/11/2018</div>
<div class="a" style="left:827px;top:326px;width:99px;height:1px;background:#e6e6e6"></div>
<div class="t" style="left:827px;top:315px;font-size:11px;line-height:11px;color:#000;width:99px;overflow:hidden;text-align:center;transform:scaleY(1.125);transform-origin:0 9px;letter-spacing:0.55px;">01/01/2000</div>
<div class="a" style="left:927px;top:326px;width:99px;height:1px;background:#e6e6e6"></div>
<div class="t" style="left:927px;top:315px;font-size:11px;line-height:11px;color:#000;width:99px;overflow:hidden;text-align:center;transform:scaleY(1.125);transform-origin:0 9px;letter-spacing:0.55px;">01/01/2000</div>
<div class="a" style="left:2px;top:327px;width:98px;height:13px;background:#ee82ee"></div>
<div class="a" style="left:2px;top:340px;width:98px;height:1px;background:#e6e6e6"></div>
<div class="t" style="left:4px;top:329px;font-size:11px;line-height:11px;color:#000;transform:scaleY(1.125);transform-origin:0 9px;letter-spacing:0.55px;">24/10/2018</div>
<div class="a" style="left:101px;top:327px;width:113px;height:13px;background:#ee82ee"></div>
<div class="a" style="left:101px;top:340px;width:113px;height:1px;background:#e6e6e6"></div>
<div class="t" style="left:101px;top:329px;font-size:11px;line-height:11px;color:#000;width:113px;overflow:hidden;text-align:center;transform:scaleY(1.125);transform-origin:0 9px;letter-spacing:0.55px;">24/10/2018</div>
<div class="a" style="left:215px;top:327px;width:115px;height:13px;background:#ee82ee"></div>
<div class="a" style="left:215px;top:340px;width:115px;height:1px;background:#e6e6e6"></div>
<div class="t" style="left:220px;top:329px;font-size:11px;line-height:11px;color:#000;transform:scaleY(1.125);transform-origin:0 9px;">2018-10-23</div>
<div class="a" style="left:331px;top:327px;width:131px;height:13px;background:#ee82ee"></div>
<div class="a" style="left:331px;top:340px;width:131px;height:1px;background:#e6e6e6"></div>
<div class="t" style="left:336px;top:329px;font-size:11px;line-height:11px;color:#000;transform:scaleY(1.125);transform-origin:0 9px;">FVPA_201800091</div>
<div class="a" style="left:463px;top:327px;width:99px;height:13px;background:#ee82ee"></div>
<div class="a" style="left:463px;top:340px;width:99px;height:1px;background:#e6e6e6"></div>
<div class="t" style="left:469px;top:329px;font-size:11px;line-height:11px;color:#000;transform:scaleY(1.125);transform-origin:0 9px;">TD01</div>
<div class="a" style="left:563px;top:327px;width:63px;height:13px;background:#ee82ee"></div>
<div class="a" style="left:563px;top:340px;width:63px;height:1px;background:#e6e6e6"></div>
<div class="t" style="left:568px;top:329px;font-size:11px;line-height:11px;color:#000;transform:scaleY(1.125);transform-origin:0 9px;">FPA12</div>
<div class="a" style="left:627px;top:327px;width:99px;height:13px;background:#ee82ee"></div>
<div class="a" style="left:627px;top:340px;width:99px;height:1px;background:#e6e6e6"></div>
<div class="t" style="left:627px;top:329px;font-size:11px;line-height:11px;color:#000;width:99px;overflow:hidden;text-align:center;transform:scaleY(1.125);transform-origin:0 9px;letter-spacing:0.55px;">24/10/2018</div>
<div class="a" style="left:727px;top:327px;width:99px;height:13px;background:#ee82ee"></div>
<div class="a" style="left:727px;top:340px;width:99px;height:1px;background:#e6e6e6"></div>
<div class="t" style="left:727px;top:329px;font-size:11px;line-height:11px;color:#000;width:99px;overflow:hidden;text-align:center;transform:scaleY(1.125);transform-origin:0 9px;letter-spacing:0.55px;">24/10/2018</div>
<div class="a" style="left:827px;top:327px;width:99px;height:13px;background:#ee82ee"></div>
<div class="a" style="left:827px;top:340px;width:99px;height:1px;background:#e6e6e6"></div>
<div class="t" style="left:827px;top:329px;font-size:11px;line-height:11px;color:#000;width:99px;overflow:hidden;text-align:center;transform:scaleY(1.125);transform-origin:0 9px;letter-spacing:0.55px;">24/10/2018</div>
<div class="a" style="left:927px;top:327px;width:99px;height:13px;background:#ee82ee"></div>
<div class="a" style="left:927px;top:340px;width:99px;height:1px;background:#e6e6e6"></div>
<div class="t" style="left:927px;top:329px;font-size:11px;line-height:11px;color:#000;width:99px;overflow:hidden;text-align:center;transform:scaleY(1.125);transform-origin:0 9px;letter-spacing:0.55px;">14/11/2018</div>
<div class="a" style="left:2px;top:341px;width:98px;height:13px;background:#ff4500"></div>
<div class="a" style="left:2px;top:354px;width:98px;height:1px;background:#e6e6e6"></div>
<div class="t" style="left:4px;top:343px;font-size:11px;line-height:11px;color:#000;transform:scaleY(1.125);transform-origin:0 9px;letter-spacing:0.55px;">23/10/2018</div>
<div class="a" style="left:101px;top:341px;width:113px;height:13px;background:#ff4500"></div>
<div class="a" style="left:101px;top:354px;width:113px;height:1px;background:#e6e6e6"></div>
<div class="t" style="left:101px;top:343px;font-size:11px;line-height:11px;color:#000;width:113px;overflow:hidden;text-align:center;transform:scaleY(1.125);transform-origin:0 9px;letter-spacing:0.55px;">23/10/2018</div>
<div class="a" style="left:215px;top:341px;width:115px;height:13px;background:#ff4500"></div>
<div class="a" style="left:215px;top:354px;width:115px;height:1px;background:#e6e6e6"></div>
<div class="t" style="left:220px;top:343px;font-size:11px;line-height:11px;color:#000;transform:scaleY(1.125);transform-origin:0 9px;">2018-10-23</div>
<div class="a" style="left:331px;top:341px;width:131px;height:13px;background:#ff4500"></div>
<div class="a" style="left:331px;top:354px;width:131px;height:1px;background:#e6e6e6"></div>
<div class="t" style="left:336px;top:343px;font-size:11px;line-height:11px;color:#000;transform:scaleY(1.125);transform-origin:0 9px;">FVPA_201800091</div>
<div class="a" style="left:463px;top:341px;width:99px;height:13px;background:#ff4500"></div>
<div class="a" style="left:463px;top:354px;width:99px;height:1px;background:#e6e6e6"></div>
<div class="t" style="left:469px;top:343px;font-size:11px;line-height:11px;color:#000;transform:scaleY(1.125);transform-origin:0 9px;">TD01</div>
<div class="a" style="left:563px;top:341px;width:63px;height:13px;background:#ff4500"></div>
<div class="a" style="left:563px;top:354px;width:63px;height:1px;background:#e6e6e6"></div>
<div class="t" style="left:568px;top:343px;font-size:11px;line-height:11px;color:#000;transform:scaleY(1.125);transform-origin:0 9px;">FPA12</div>
<div class="a" style="left:627px;top:341px;width:99px;height:13px;background:#ff4500"></div>
<div class="a" style="left:627px;top:354px;width:99px;height:1px;background:#e6e6e6"></div>
<div class="t" style="left:627px;top:343px;font-size:11px;line-height:11px;color:#000;width:99px;overflow:hidden;text-align:center;transform:scaleY(1.125);transform-origin:0 9px;letter-spacing:0.55px;">23/10/2018</div>
<div class="a" style="left:727px;top:341px;width:99px;height:13px;background:#ff4500"></div>
<div class="a" style="left:727px;top:354px;width:99px;height:1px;background:#e6e6e6"></div>
<div class="t" style="left:727px;top:343px;font-size:11px;line-height:11px;color:#000;width:99px;overflow:hidden;text-align:center;transform:scaleY(1.125);transform-origin:0 9px;letter-spacing:0.55px;">23/10/2018</div>
<div class="a" style="left:827px;top:341px;width:99px;height:13px;background:#ff4500"></div>
<div class="a" style="left:827px;top:354px;width:99px;height:1px;background:#e6e6e6"></div>
<div class="t" style="left:827px;top:343px;font-size:11px;line-height:11px;color:#000;width:99px;overflow:hidden;text-align:center;transform:scaleY(1.125);transform-origin:0 9px;letter-spacing:0.55px;">23/10/2018</div>
<div class="a" style="left:927px;top:341px;width:99px;height:13px;background:#ff4500"></div>
<div class="a" style="left:927px;top:354px;width:99px;height:1px;background:#e6e6e6"></div>
<div class="t" style="left:927px;top:343px;font-size:11px;line-height:11px;color:#000;width:99px;overflow:hidden;text-align:center;transform:scaleY(1.125);transform-origin:0 9px;letter-spacing:0.55px;">13/11/2018</div>
<div class="a" style="left:2px;top:355px;width:98px;height:13px;background:#ff4500"></div>
<div class="a" style="left:2px;top:368px;width:98px;height:1px;background:#e6e6e6"></div>
<div class="t" style="left:4px;top:357px;font-size:11px;line-height:11px;color:#000;transform:scaleY(1.125);transform-origin:0 9px;letter-spacing:0.55px;">23/10/2018</div>
<div class="a" style="left:101px;top:355px;width:113px;height:13px;background:#ff4500"></div>
<div class="a" style="left:101px;top:368px;width:113px;height:1px;background:#e6e6e6"></div>
<div class="t" style="left:101px;top:357px;font-size:11px;line-height:11px;color:#000;width:113px;overflow:hidden;text-align:center;transform:scaleY(1.125);transform-origin:0 9px;letter-spacing:0.55px;">23/10/2018</div>
<div class="a" style="left:215px;top:355px;width:115px;height:13px;background:#ff4500"></div>
<div class="a" style="left:215px;top:368px;width:115px;height:1px;background:#e6e6e6"></div>
<div class="t" style="left:220px;top:357px;font-size:11px;line-height:11px;color:#000;transform:scaleY(1.125);transform-origin:0 9px;">2018-10-23</div>
<div class="a" style="left:331px;top:355px;width:131px;height:13px;background:#ff4500"></div>
<div class="a" style="left:331px;top:368px;width:131px;height:1px;background:#e6e6e6"></div>
<div class="t" style="left:336px;top:357px;font-size:11px;line-height:11px;color:#000;transform:scaleY(1.125);transform-origin:0 9px;">FVPA_201800092</div>
<div class="a" style="left:463px;top:355px;width:99px;height:13px;background:#ff4500"></div>
<div class="a" style="left:463px;top:368px;width:99px;height:1px;background:#e6e6e6"></div>
<div class="t" style="left:469px;top:357px;font-size:11px;line-height:11px;color:#000;transform:scaleY(1.125);transform-origin:0 9px;">TD01</div>
<div class="a" style="left:563px;top:355px;width:63px;height:13px;background:#ff4500"></div>
<div class="a" style="left:563px;top:368px;width:63px;height:1px;background:#e6e6e6"></div>
<div class="t" style="left:568px;top:357px;font-size:11px;line-height:11px;color:#000;transform:scaleY(1.125);transform-origin:0 9px;">FPA12</div>
<div class="a" style="left:627px;top:355px;width:99px;height:13px;background:#ff4500"></div>
<div class="a" style="left:627px;top:368px;width:99px;height:1px;background:#e6e6e6"></div>
<div class="t" style="left:627px;top:357px;font-size:11px;line-height:11px;color:#000;width:99px;overflow:hidden;text-align:center;transform:scaleY(1.125);transform-origin:0 9px;letter-spacing:0.55px;">23/10/2018</div>
<div class="a" style="left:727px;top:355px;width:99px;height:13px;background:#ff4500"></div>
<div class="a" style="left:727px;top:368px;width:99px;height:1px;background:#e6e6e6"></div>
<div class="t" style="left:727px;top:357px;font-size:11px;line-height:11px;color:#000;width:99px;overflow:hidden;text-align:center;transform:scaleY(1.125);transform-origin:0 9px;letter-spacing:0.55px;">23/10/2018</div>
<div class="a" style="left:827px;top:355px;width:99px;height:13px;background:#ff4500"></div>
<div class="a" style="left:827px;top:368px;width:99px;height:1px;background:#e6e6e6"></div>
<div class="t" style="left:827px;top:357px;font-size:11px;line-height:11px;color:#000;width:99px;overflow:hidden;text-align:center;transform:scaleY(1.125);transform-origin:0 9px;letter-spacing:0.55px;">23/10/2018</div>
<div class="a" style="left:927px;top:355px;width:99px;height:13px;background:#ff4500"></div>
<div class="a" style="left:927px;top:368px;width:99px;height:1px;background:#e6e6e6"></div>
<div class="t" style="left:927px;top:357px;font-size:11px;line-height:11px;color:#000;width:99px;overflow:hidden;text-align:center;transform:scaleY(1.125);transform-origin:0 9px;letter-spacing:0.55px;">13/11/2018</div>
<div class="a" style="left:2px;top:369px;width:98px;height:13px;background:#ee82ee"></div>
<div class="a" style="left:2px;top:382px;width:98px;height:1px;background:#e6e6e6"></div>
<div class="t" style="left:4px;top:371px;font-size:11px;line-height:11px;color:#000;transform:scaleY(1.125);transform-origin:0 9px;letter-spacing:0.55px;">24/10/2018</div>
<div class="a" style="left:101px;top:369px;width:113px;height:13px;background:#ee82ee"></div>
<div class="a" style="left:101px;top:382px;width:113px;height:1px;background:#e6e6e6"></div>
<div class="t" style="left:101px;top:371px;font-size:11px;line-height:11px;color:#000;width:113px;overflow:hidden;text-align:center;transform:scaleY(1.125);transform-origin:0 9px;letter-spacing:0.55px;">24/10/2018</div>
<div class="a" style="left:215px;top:369px;width:115px;height:13px;background:#ee82ee"></div>
<div class="a" style="left:215px;top:382px;width:115px;height:1px;background:#e6e6e6"></div>
<div class="t" style="left:220px;top:371px;font-size:11px;line-height:11px;color:#000;transform:scaleY(1.125);transform-origin:0 9px;">2018-10-23</div>
<div class="a" style="left:331px;top:369px;width:131px;height:13px;background:#ee82ee"></div>
<div class="a" style="left:331px;top:382px;width:131px;height:1px;background:#e6e6e6"></div>
<div class="t" style="left:336px;top:371px;font-size:11px;line-height:11px;color:#000;transform:scaleY(1.125);transform-origin:0 9px;">FVPA_201800092</div>
<div class="a" style="left:463px;top:369px;width:99px;height:13px;background:#ee82ee"></div>
<div class="a" style="left:463px;top:382px;width:99px;height:1px;background:#e6e6e6"></div>
<div class="t" style="left:469px;top:371px;font-size:11px;line-height:11px;color:#000;transform:scaleY(1.125);transform-origin:0 9px;">TD01</div>
<div class="a" style="left:563px;top:369px;width:63px;height:13px;background:#ee82ee"></div>
<div class="a" style="left:563px;top:382px;width:63px;height:1px;background:#e6e6e6"></div>
<div class="t" style="left:568px;top:371px;font-size:11px;line-height:11px;color:#000;transform:scaleY(1.125);transform-origin:0 9px;">FPA12</div>
<div class="a" style="left:627px;top:369px;width:99px;height:13px;background:#ee82ee"></div>
<div class="a" style="left:627px;top:382px;width:99px;height:1px;background:#e6e6e6"></div>
<div class="t" style="left:627px;top:371px;font-size:11px;line-height:11px;color:#000;width:99px;overflow:hidden;text-align:center;transform:scaleY(1.125);transform-origin:0 9px;letter-spacing:0.55px;">24/10/2018</div>
<div class="a" style="left:727px;top:369px;width:99px;height:13px;background:#ee82ee"></div>
<div class="a" style="left:727px;top:382px;width:99px;height:1px;background:#e6e6e6"></div>
<div class="t" style="left:727px;top:371px;font-size:11px;line-height:11px;color:#000;width:99px;overflow:hidden;text-align:center;transform:scaleY(1.125);transform-origin:0 9px;letter-spacing:0.55px;">24/10/2018</div>
<div class="a" style="left:827px;top:369px;width:99px;height:13px;background:#ee82ee"></div>
<div class="a" style="left:827px;top:382px;width:99px;height:1px;background:#e6e6e6"></div>
<div class="t" style="left:827px;top:371px;font-size:11px;line-height:11px;color:#000;width:99px;overflow:hidden;text-align:center;transform:scaleY(1.125);transform-origin:0 9px;letter-spacing:0.55px;">24/10/2018</div>
<div class="a" style="left:927px;top:369px;width:99px;height:13px;background:#ee82ee"></div>
<div class="a" style="left:927px;top:382px;width:99px;height:1px;background:#e6e6e6"></div>
<div class="t" style="left:927px;top:371px;font-size:11px;line-height:11px;color:#000;width:99px;overflow:hidden;text-align:center;transform:scaleY(1.125);transform-origin:0 9px;letter-spacing:0.55px;">14/11/2018</div>
<div class="a" style="left:2px;top:396px;width:98px;height:1px;background:#e6e6e6"></div>
<div class="t" style="left:4px;top:385px;font-size:11px;line-height:11px;color:#000;transform:scaleY(1.125);transform-origin:0 9px;letter-spacing:0.55px;">16/11/2018</div>
<div class="a" style="left:101px;top:396px;width:113px;height:1px;background:#e6e6e6"></div>
<div class="t" style="left:101px;top:385px;font-size:11px;line-height:11px;color:#000;width:113px;overflow:hidden;text-align:center;transform:scaleY(1.125);transform-origin:0 9px;letter-spacing:0.55px;">01/01/2000</div>
<div class="a" style="left:215px;top:396px;width:115px;height:1px;background:#e6e6e6"></div>
<div class="t" style="left:220px;top:385px;font-size:11px;line-height:11px;color:#000;transform:scaleY(1.125);transform-origin:0 9px;">2018-10-31</div>
<div class="a" style="left:331px;top:396px;width:131px;height:1px;background:#e6e6e6"></div>
<div class="t" style="left:336px;top:385px;font-size:11px;line-height:11px;color:#000;transform:scaleY(1.125);transform-origin:0 9px;">FVPA_201800093</div>
<div class="a" style="left:463px;top:396px;width:99px;height:1px;background:#e6e6e6"></div>
<div class="t" style="left:469px;top:385px;font-size:11px;line-height:11px;color:#000;transform:scaleY(1.125);transform-origin:0 9px;">TD01</div>
<div class="a" style="left:563px;top:396px;width:63px;height:1px;background:#e6e6e6"></div>
<div class="t" style="left:568px;top:385px;font-size:11px;line-height:11px;color:#000;transform:scaleY(1.125);transform-origin:0 9px;">FPA12</div>
<div class="a" style="left:627px;top:396px;width:99px;height:1px;background:#e6e6e6"></div>
<div class="t" style="left:627px;top:385px;font-size:11px;line-height:11px;color:#000;width:99px;overflow:hidden;text-align:center;transform:scaleY(1.125);transform-origin:0 9px;letter-spacing:0.55px;">16/11/2018</div>
<div class="a" style="left:727px;top:396px;width:99px;height:1px;background:#e6e6e6"></div>
<div class="t" style="left:727px;top:385px;font-size:11px;line-height:11px;color:#000;width:99px;overflow:hidden;text-align:center;transform:scaleY(1.125);transform-origin:0 9px;letter-spacing:0.55px;">16/11/2018</div>
<div class="a" style="left:827px;top:396px;width:99px;height:1px;background:#e6e6e6"></div>
<div class="t" style="left:827px;top:385px;font-size:11px;line-height:11px;color:#000;width:99px;overflow:hidden;text-align:center;transform:scaleY(1.125);transform-origin:0 9px;letter-spacing:0.55px;">01/01/2000</div>
<div class="a" style="left:927px;top:396px;width:99px;height:1px;background:#e6e6e6"></div>
<div class="t" style="left:927px;top:385px;font-size:11px;line-height:11px;color:#000;width:99px;overflow:hidden;text-align:center;transform:scaleY(1.125);transform-origin:0 9px;letter-spacing:0.55px;">01/01/2000</div>
<div class="a" style="left:2px;top:397px;width:98px;height:13px;background:#ff4500"></div>
<div class="a" style="left:2px;top:410px;width:98px;height:1px;background:#e6e6e6"></div>
<div class="t" style="left:4px;top:399px;font-size:11px;line-height:11px;color:#000;transform:scaleY(1.125);transform-origin:0 9px;letter-spacing:0.55px;">13/11/2018</div>
<div class="a" style="left:101px;top:397px;width:113px;height:13px;background:#ff4500"></div>
<div class="a" style="left:101px;top:410px;width:113px;height:1px;background:#e6e6e6"></div>
<div class="t" style="left:101px;top:399px;font-size:11px;line-height:11px;color:#000;width:113px;overflow:hidden;text-align:center;transform:scaleY(1.125);transform-origin:0 9px;letter-spacing:0.55px;">13/11/2018</div>
<div class="a" style="left:215px;top:397px;width:115px;height:13px;background:#ff4500"></div>
<div class="a" style="left:215px;top:410px;width:115px;height:1px;background:#e6e6e6"></div>
<div class="t" style="left:220px;top:399px;font-size:11px;line-height:11px;color:#000;transform:scaleY(1.125);transform-origin:0 9px;">2018-10-31</div>
<div class="a" style="left:331px;top:397px;width:131px;height:13px;background:#ff4500"></div>
<div class="a" style="left:331px;top:410px;width:131px;height:1px;background:#e6e6e6"></div>
<div class="t" style="left:336px;top:399px;font-size:11px;line-height:11px;color:#000;transform:scaleY(1.125);transform-origin:0 9px;">FVPA_201800093</div>
<div class="a" style="left:463px;top:397px;width:99px;height:13px;background:#ff4500"></div>
<div class="a" style="left:463px;top:410px;width:99px;height:1px;background:#e6e6e6"></div>
<div class="t" style="left:469px;top:399px;font-size:11px;line-height:11px;color:#000;transform:scaleY(1.125);transform-origin:0 9px;">TD01</div>
<div class="a" style="left:563px;top:397px;width:63px;height:13px;background:#ff4500"></div>
<div class="a" style="left:563px;top:410px;width:63px;height:1px;background:#e6e6e6"></div>
<div class="t" style="left:568px;top:399px;font-size:11px;line-height:11px;color:#000;transform:scaleY(1.125);transform-origin:0 9px;">FPA12</div>
<div class="a" style="left:627px;top:397px;width:99px;height:13px;background:#ff4500"></div>
<div class="a" style="left:627px;top:410px;width:99px;height:1px;background:#e6e6e6"></div>
<div class="t" style="left:627px;top:399px;font-size:11px;line-height:11px;color:#000;width:99px;overflow:hidden;text-align:center;transform:scaleY(1.125);transform-origin:0 9px;letter-spacing:0.55px;">13/11/2018</div>
<div class="a" style="left:727px;top:397px;width:99px;height:13px;background:#ff4500"></div>
<div class="a" style="left:727px;top:410px;width:99px;height:1px;background:#e6e6e6"></div>
<div class="t" style="left:727px;top:399px;font-size:11px;line-height:11px;color:#000;width:99px;overflow:hidden;text-align:center;transform:scaleY(1.125);transform-origin:0 9px;letter-spacing:0.55px;">13/11/2018</div>
<div class="a" style="left:827px;top:397px;width:99px;height:13px;background:#ff4500"></div>
<div class="a" style="left:827px;top:410px;width:99px;height:1px;background:#e6e6e6"></div>
<div class="t" style="left:827px;top:399px;font-size:11px;line-height:11px;color:#000;width:99px;overflow:hidden;text-align:center;transform:scaleY(1.125);transform-origin:0 9px;letter-spacing:0.55px;">13/11/2018</div>
<div class="a" style="left:927px;top:397px;width:99px;height:13px;background:#ff4500"></div>
<div class="a" style="left:927px;top:410px;width:99px;height:1px;background:#e6e6e6"></div>
<div class="t" style="left:927px;top:399px;font-size:11px;line-height:11px;color:#000;width:99px;overflow:hidden;text-align:center;transform:scaleY(1.125);transform-origin:0 9px;letter-spacing:0.55px;">13/11/2018</div>
<div class="a" style="left:2px;top:411px;width:98px;height:13px;background:#32cd32"></div>
<div class="a" style="left:2px;top:424px;width:98px;height:1px;background:#e6e6e6"></div>
<div class="t" style="left:4px;top:413px;font-size:11px;line-height:11px;color:#000;transform:scaleY(1.125);transform-origin:0 9px;letter-spacing:0.55px;">13/11/2018</div>
<div class="a" style="left:101px;top:411px;width:113px;height:13px;background:#32cd32"></div>
<div class="a" style="left:101px;top:424px;width:113px;height:1px;background:#e6e6e6"></div>
<div class="t" style="left:101px;top:413px;font-size:11px;line-height:11px;color:#000;width:113px;overflow:hidden;text-align:center;transform:scaleY(1.125);transform-origin:0 9px;letter-spacing:0.55px;">13/11/2018</div>
<div class="a" style="left:215px;top:411px;width:115px;height:13px;background:#32cd32"></div>
<div class="a" style="left:215px;top:424px;width:115px;height:1px;background:#e6e6e6"></div>
<div class="t" style="left:220px;top:413px;font-size:11px;line-height:11px;color:#000;transform:scaleY(1.125);transform-origin:0 9px;">2018-10-31</div>
<div class="a" style="left:331px;top:411px;width:131px;height:13px;background:#32cd32"></div>
<div class="a" style="left:331px;top:424px;width:131px;height:1px;background:#e6e6e6"></div>
<div class="t" style="left:336px;top:413px;font-size:11px;line-height:11px;color:#000;transform:scaleY(1.125);transform-origin:0 9px;">FVPA_201800094</div>
<div class="a" style="left:463px;top:411px;width:99px;height:13px;background:#32cd32"></div>
<div class="a" style="left:463px;top:424px;width:99px;height:1px;background:#e6e6e6"></div>
<div class="t" style="left:469px;top:413px;font-size:11px;line-height:11px;color:#000;transform:scaleY(1.125);transform-origin:0 9px;">TD01</div>
<div class="a" style="left:563px;top:411px;width:63px;height:13px;background:#32cd32"></div>
<div class="a" style="left:563px;top:424px;width:63px;height:1px;background:#e6e6e6"></div>
<div class="t" style="left:568px;top:413px;font-size:11px;line-height:11px;color:#000;transform:scaleY(1.125);transform-origin:0 9px;">FPA12</div>
<div class="a" style="left:627px;top:411px;width:99px;height:13px;background:#32cd32"></div>
<div class="a" style="left:627px;top:424px;width:99px;height:1px;background:#e6e6e6"></div>
<div class="t" style="left:627px;top:413px;font-size:11px;line-height:11px;color:#000;width:99px;overflow:hidden;text-align:center;transform:scaleY(1.125);transform-origin:0 9px;letter-spacing:0.55px;">13/11/2018</div>
<div class="a" style="left:727px;top:411px;width:99px;height:13px;background:#32cd32"></div>
<div class="a" style="left:727px;top:424px;width:99px;height:1px;background:#e6e6e6"></div>
<div class="t" style="left:727px;top:413px;font-size:11px;line-height:11px;color:#000;width:99px;overflow:hidden;text-align:center;transform:scaleY(1.125);transform-origin:0 9px;letter-spacing:0.55px;">13/11/2018</div>
<div class="a" style="left:827px;top:411px;width:99px;height:13px;background:#32cd32"></div>
<div class="a" style="left:827px;top:424px;width:99px;height:1px;background:#e6e6e6"></div>
<div class="t" style="left:827px;top:413px;font-size:11px;line-height:11px;color:#000;width:99px;overflow:hidden;text-align:center;transform:scaleY(1.125);transform-origin:0 9px;letter-spacing:0.55px;">13/11/2018</div>
<div class="a" style="left:927px;top:411px;width:99px;height:13px;background:#32cd32"></div>
<div class="a" style="left:927px;top:424px;width:99px;height:1px;background:#e6e6e6"></div>
<div class="t" style="left:927px;top:413px;font-size:11px;line-height:11px;color:#000;width:99px;overflow:hidden;text-align:center;transform:scaleY(1.125);transform-origin:0 9px;letter-spacing:0.55px;">13/11/2018</div>
<div class="a" style="left:2px;top:425px;width:98px;height:13px;background:#98fb98"></div>
<div class="a" style="left:2px;top:438px;width:98px;height:1px;background:#e6e6e6"></div>
<div class="t" style="left:4px;top:427px;font-size:11px;line-height:11px;color:#000;transform:scaleY(1.125);transform-origin:0 9px;letter-spacing:0.55px;">13/11/2018</div>
<div class="a" style="left:101px;top:425px;width:113px;height:13px;background:#98fb98"></div>
<div class="a" style="left:101px;top:438px;width:113px;height:1px;background:#e6e6e6"></div>
<div class="t" style="left:101px;top:427px;font-size:11px;line-height:11px;color:#000;width:113px;overflow:hidden;text-align:center;transform:scaleY(1.125);transform-origin:0 9px;letter-spacing:0.55px;">13/11/2018</div>
<div class="a" style="left:215px;top:425px;width:115px;height:13px;background:#98fb98"></div>
<div class="a" style="left:215px;top:438px;width:115px;height:1px;background:#e6e6e6"></div>
<div class="t" style="left:220px;top:427px;font-size:11px;line-height:11px;color:#000;transform:scaleY(1.125);transform-origin:0 9px;">2018-10-31</div>
<div class="a" style="left:331px;top:425px;width:131px;height:13px;background:#98fb98"></div>
<div class="a" style="left:331px;top:438px;width:131px;height:1px;background:#e6e6e6"></div>
<div class="t" style="left:336px;top:427px;font-size:11px;line-height:11px;color:#000;transform:scaleY(1.125);transform-origin:0 9px;">FVPA_201800095</div>
<div class="a" style="left:463px;top:425px;width:99px;height:13px;background:#98fb98"></div>
<div class="a" style="left:463px;top:438px;width:99px;height:1px;background:#e6e6e6"></div>
<div class="t" style="left:469px;top:427px;font-size:11px;line-height:11px;color:#000;transform:scaleY(1.125);transform-origin:0 9px;">TD01</div>
<div class="a" style="left:563px;top:425px;width:63px;height:13px;background:#98fb98"></div>
<div class="a" style="left:563px;top:438px;width:63px;height:1px;background:#e6e6e6"></div>
<div class="t" style="left:568px;top:427px;font-size:11px;line-height:11px;color:#000;transform:scaleY(1.125);transform-origin:0 9px;">FPA12</div>
<div class="a" style="left:627px;top:425px;width:99px;height:13px;background:#98fb98"></div>
<div class="a" style="left:627px;top:438px;width:99px;height:1px;background:#e6e6e6"></div>
<div class="t" style="left:627px;top:427px;font-size:11px;line-height:11px;color:#000;width:99px;overflow:hidden;text-align:center;transform:scaleY(1.125);transform-origin:0 9px;letter-spacing:0.55px;">13/11/2018</div>
<div class="a" style="left:727px;top:425px;width:99px;height:13px;background:#98fb98"></div>
<div class="a" style="left:727px;top:438px;width:99px;height:1px;background:#e6e6e6"></div>
<div class="t" style="left:727px;top:427px;font-size:11px;line-height:11px;color:#000;width:99px;overflow:hidden;text-align:center;transform:scaleY(1.125);transform-origin:0 9px;letter-spacing:0.55px;">13/11/2018</div>
<div class="a" style="left:827px;top:425px;width:99px;height:13px;background:#98fb98"></div>
<div class="a" style="left:827px;top:438px;width:99px;height:1px;background:#e6e6e6"></div>
<div class="t" style="left:827px;top:427px;font-size:11px;line-height:11px;color:#000;width:99px;overflow:hidden;text-align:center;transform:scaleY(1.125);transform-origin:0 9px;letter-spacing:0.55px;">13/11/2018</div>
<div class="a" style="left:927px;top:425px;width:99px;height:13px;background:#98fb98"></div>
<div class="a" style="left:927px;top:438px;width:99px;height:1px;background:#e6e6e6"></div>
<div class="t" style="left:927px;top:427px;font-size:11px;line-height:11px;color:#000;width:99px;overflow:hidden;text-align:center;transform:scaleY(1.125);transform-origin:0 9px;letter-spacing:0.55px;">13/11/2018</div>
<div class="a" style="left:2px;top:439px;width:98px;height:13px;background:#ff4500"></div>
<div class="a" style="left:2px;top:452px;width:98px;height:1px;background:#e6e6e6"></div>
<div class="t" style="left:4px;top:441px;font-size:11px;line-height:11px;color:#000;transform:scaleY(1.125);transform-origin:0 9px;letter-spacing:0.55px;">13/11/2018</div>
<div class="a" style="left:101px;top:439px;width:113px;height:13px;background:#ff4500"></div>
<div class="a" style="left:101px;top:452px;width:113px;height:1px;background:#e6e6e6"></div>
<div class="t" style="left:101px;top:441px;font-size:11px;line-height:11px;color:#000;width:113px;overflow:hidden;text-align:center;transform:scaleY(1.125);transform-origin:0 9px;letter-spacing:0.55px;">13/11/2018</div>
<div class="a" style="left:215px;top:439px;width:115px;height:13px;background:#ff4500"></div>
<div class="a" style="left:215px;top:452px;width:115px;height:1px;background:#e6e6e6"></div>
<div class="t" style="left:220px;top:441px;font-size:11px;line-height:11px;color:#000;transform:scaleY(1.125);transform-origin:0 9px;">2018-10-31</div>
<div class="a" style="left:331px;top:439px;width:131px;height:13px;background:#ff4500"></div>
<div class="a" style="left:331px;top:452px;width:131px;height:1px;background:#e6e6e6"></div>
<div class="t" style="left:336px;top:441px;font-size:11px;line-height:11px;color:#000;transform:scaleY(1.125);transform-origin:0 9px;">FVPA_201800096</div>
<div class="a" style="left:463px;top:439px;width:99px;height:13px;background:#ff4500"></div>
<div class="a" style="left:463px;top:452px;width:99px;height:1px;background:#e6e6e6"></div>
<div class="t" style="left:469px;top:441px;font-size:11px;line-height:11px;color:#000;transform:scaleY(1.125);transform-origin:0 9px;">TD01</div>
<div class="a" style="left:563px;top:439px;width:63px;height:13px;background:#ff4500"></div>
<div class="a" style="left:563px;top:452px;width:63px;height:1px;background:#e6e6e6"></div>
<div class="t" style="left:568px;top:441px;font-size:11px;line-height:11px;color:#000;transform:scaleY(1.125);transform-origin:0 9px;">FPA12</div>
<div class="a" style="left:627px;top:439px;width:99px;height:13px;background:#ff4500"></div>
<div class="a" style="left:627px;top:452px;width:99px;height:1px;background:#e6e6e6"></div>
<div class="t" style="left:627px;top:441px;font-size:11px;line-height:11px;color:#000;width:99px;overflow:hidden;text-align:center;transform:scaleY(1.125);transform-origin:0 9px;letter-spacing:0.55px;">13/11/2018</div>
<div class="a" style="left:727px;top:439px;width:99px;height:13px;background:#ff4500"></div>
<div class="a" style="left:727px;top:452px;width:99px;height:1px;background:#e6e6e6"></div>
<div class="t" style="left:727px;top:441px;font-size:11px;line-height:11px;color:#000;width:99px;overflow:hidden;text-align:center;transform:scaleY(1.125);transform-origin:0 9px;letter-spacing:0.55px;">13/11/2018</div>
<div class="a" style="left:827px;top:439px;width:99px;height:13px;background:#ff4500"></div>
<div class="a" style="left:827px;top:452px;width:99px;height:1px;background:#e6e6e6"></div>
<div class="t" style="left:827px;top:441px;font-size:11px;line-height:11px;color:#000;width:99px;overflow:hidden;text-align:center;transform:scaleY(1.125);transform-origin:0 9px;letter-spacing:0.55px;">13/11/2018</div>
<div class="a" style="left:927px;top:439px;width:99px;height:13px;background:#ff4500"></div>
<div class="a" style="left:927px;top:452px;width:99px;height:1px;background:#e6e6e6"></div>
<div class="t" style="left:927px;top:441px;font-size:11px;line-height:11px;color:#000;width:99px;overflow:hidden;text-align:center;transform:scaleY(1.125);transform-origin:0 9px;letter-spacing:0.55px;">13/11/2018</div>
<div class="a" style="left:2px;top:466px;width:98px;height:1px;background:#e6e6e6"></div>
<div class="t" style="left:4px;top:455px;font-size:11px;line-height:11px;color:#000;transform:scaleY(1.125);transform-origin:0 9px;letter-spacing:0.55px;">16/11/2018</div>
<div class="a" style="left:101px;top:466px;width:113px;height:1px;background:#e6e6e6"></div>
<div class="t" style="left:101px;top:455px;font-size:11px;line-height:11px;color:#000;width:113px;overflow:hidden;text-align:center;transform:scaleY(1.125);transform-origin:0 9px;letter-spacing:0.55px;">01/01/2000</div>
<div class="a" style="left:215px;top:466px;width:115px;height:1px;background:#e6e6e6"></div>
<div class="t" style="left:220px;top:455px;font-size:11px;line-height:11px;color:#000;transform:scaleY(1.125);transform-origin:0 9px;">2018-10-31</div>
<div class="a" style="left:331px;top:466px;width:131px;height:1px;background:#e6e6e6"></div>
<div class="t" style="left:336px;top:455px;font-size:11px;line-height:11px;color:#000;transform:scaleY(1.125);transform-origin:0 9px;">FVPA_201800096</div>
<div class="a" style="left:463px;top:466px;width:99px;height:1px;background:#e6e6e6"></div>
<div class="t" style="left:469px;top:455px;font-size:11px;line-height:11px;color:#000;transform:scaleY(1.125);transform-origin:0 9px;">TD01</div>
<div class="a" style="left:563px;top:466px;width:63px;height:1px;background:#e6e6e6"></div>
<div class="t" style="left:568px;top:455px;font-size:11px;line-height:11px;color:#000;transform:scaleY(1.125);transform-origin:0 9px;">FPA12</div>
<div class="a" style="left:627px;top:466px;width:99px;height:1px;background:#e6e6e6"></div>
<div class="t" style="left:627px;top:455px;font-size:11px;line-height:11px;color:#000;width:99px;overflow:hidden;text-align:center;transform:scaleY(1.125);transform-origin:0 9px;letter-spacing:0.55px;">16/11/2018</div>
<div class="a" style="left:727px;top:466px;width:99px;height:1px;background:#e6e6e6"></div>
<div class="t" style="left:727px;top:455px;font-size:11px;line-height:11px;color:#000;width:99px;overflow:hidden;text-align:center;transform:scaleY(1.125);transform-origin:0 9px;letter-spacing:0.55px;">16/11/2018</div>
<div class="a" style="left:827px;top:466px;width:99px;height:1px;background:#e6e6e6"></div>
<div class="t" style="left:827px;top:455px;font-size:11px;line-height:11px;color:#000;width:99px;overflow:hidden;text-align:center;transform:scaleY(1.125);transform-origin:0 9px;letter-spacing:0.55px;">01/01/2000</div>
<div class="a" style="left:927px;top:466px;width:99px;height:1px;background:#e6e6e6"></div>
<div class="t" style="left:927px;top:455px;font-size:11px;line-height:11px;color:#000;width:99px;overflow:hidden;text-align:center;transform:scaleY(1.125);transform-origin:0 9px;letter-spacing:0.55px;">01/01/2000</div>
<div class="a" style="left:2px;top:480px;width:98px;height:1px;background:#e6e6e6"></div>
<div class="t" style="left:4px;top:469px;font-size:11px;line-height:11px;color:#000;transform:scaleY(1.125);transform-origin:0 9px;letter-spacing:0.55px;">16/11/2018</div>
<div class="a" style="left:101px;top:480px;width:113px;height:1px;background:#e6e6e6"></div>
<div class="t" style="left:101px;top:469px;font-size:11px;line-height:11px;color:#000;width:113px;overflow:hidden;text-align:center;transform:scaleY(1.125);transform-origin:0 9px;letter-spacing:0.55px;">01/01/2000</div>
<div class="a" style="left:215px;top:480px;width:115px;height:1px;background:#e6e6e6"></div>
<div class="t" style="left:220px;top:469px;font-size:11px;line-height:11px;color:#000;transform:scaleY(1.125);transform-origin:0 9px;">2018-10-31</div>
<div class="a" style="left:331px;top:480px;width:131px;height:1px;background:#e6e6e6"></div>
<div class="t" style="left:336px;top:469px;font-size:11px;line-height:11px;color:#000;transform:scaleY(1.125);transform-origin:0 9px;">FVPA_201800097</div>
<div class="a" style="left:463px;top:480px;width:99px;height:1px;background:#e6e6e6"></div>
<div class="t" style="left:469px;top:469px;font-size:11px;line-height:11px;color:#000;transform:scaleY(1.125);transform-origin:0 9px;">TD01</div>
<div class="a" style="left:563px;top:480px;width:63px;height:1px;background:#e6e6e6"></div>
<div class="t" style="left:568px;top:469px;font-size:11px;line-height:11px;color:#000;transform:scaleY(1.125);transform-origin:0 9px;">FPA12</div>
<div class="a" style="left:627px;top:480px;width:99px;height:1px;background:#e6e6e6"></div>
<div class="t" style="left:627px;top:469px;font-size:11px;line-height:11px;color:#000;width:99px;overflow:hidden;text-align:center;transform:scaleY(1.125);transform-origin:0 9px;letter-spacing:0.55px;">16/11/2018</div>
<div class="a" style="left:727px;top:480px;width:99px;height:1px;background:#e6e6e6"></div>
<div class="t" style="left:727px;top:469px;font-size:11px;line-height:11px;color:#000;width:99px;overflow:hidden;text-align:center;transform:scaleY(1.125);transform-origin:0 9px;letter-spacing:0.55px;">16/11/2018</div>
<div class="a" style="left:827px;top:480px;width:99px;height:1px;background:#e6e6e6"></div>
<div class="t" style="left:827px;top:469px;font-size:11px;line-height:11px;color:#000;width:99px;overflow:hidden;text-align:center;transform:scaleY(1.125);transform-origin:0 9px;letter-spacing:0.55px;">01/01/2000</div>
<div class="a" style="left:927px;top:480px;width:99px;height:1px;background:#e6e6e6"></div>
<div class="t" style="left:927px;top:469px;font-size:11px;line-height:11px;color:#000;width:99px;overflow:hidden;text-align:center;transform:scaleY(1.125);transform-origin:0 9px;letter-spacing:0.55px;">01/01/2000</div>
<div class="a" style="left:2px;top:481px;width:98px;height:13px;background:#ff4500"></div>
<div class="a" style="left:2px;top:494px;width:98px;height:1px;background:#e6e6e6"></div>
<div class="t" style="left:4px;top:483px;font-size:11px;line-height:11px;color:#000;transform:scaleY(1.125);transform-origin:0 9px;letter-spacing:0.55px;">13/11/2018</div>
<div class="a" style="left:101px;top:481px;width:113px;height:13px;background:#ff4500"></div>
<div class="a" style="left:101px;top:494px;width:113px;height:1px;background:#e6e6e6"></div>
<div class="t" style="left:101px;top:483px;font-size:11px;line-height:11px;color:#000;width:113px;overflow:hidden;text-align:center;transform:scaleY(1.125);transform-origin:0 9px;letter-spacing:0.55px;">13/11/2018</div>
<div class="a" style="left:215px;top:481px;width:115px;height:13px;background:#ff4500"></div>
<div class="a" style="left:215px;top:494px;width:115px;height:1px;background:#e6e6e6"></div>
<div class="t" style="left:220px;top:483px;font-size:11px;line-height:11px;color:#000;transform:scaleY(1.125);transform-origin:0 9px;">2018-10-31</div>
<div class="a" style="left:331px;top:481px;width:131px;height:13px;background:#ff4500"></div>
<div class="a" style="left:331px;top:494px;width:131px;height:1px;background:#e6e6e6"></div>
<div class="t" style="left:336px;top:483px;font-size:11px;line-height:11px;color:#000;transform:scaleY(1.125);transform-origin:0 9px;">FVPA_201800097</div>
<div class="a" style="left:463px;top:481px;width:99px;height:13px;background:#ff4500"></div>
<div class="a" style="left:463px;top:494px;width:99px;height:1px;background:#e6e6e6"></div>
<div class="t" style="left:469px;top:483px;font-size:11px;line-height:11px;color:#000;transform:scaleY(1.125);transform-origin:0 9px;">TD01</div>
<div class="a" style="left:563px;top:481px;width:63px;height:13px;background:#ff4500"></div>
<div class="a" style="left:563px;top:494px;width:63px;height:1px;background:#e6e6e6"></div>
<div class="t" style="left:568px;top:483px;font-size:11px;line-height:11px;color:#000;transform:scaleY(1.125);transform-origin:0 9px;">FPA12</div>
<div class="a" style="left:627px;top:481px;width:99px;height:13px;background:#ff4500"></div>
<div class="a" style="left:627px;top:494px;width:99px;height:1px;background:#e6e6e6"></div>
<div class="t" style="left:627px;top:483px;font-size:11px;line-height:11px;color:#000;width:99px;overflow:hidden;text-align:center;transform:scaleY(1.125);transform-origin:0 9px;letter-spacing:0.55px;">13/11/2018</div>
<div class="a" style="left:727px;top:481px;width:99px;height:13px;background:#ff4500"></div>
<div class="a" style="left:727px;top:494px;width:99px;height:1px;background:#e6e6e6"></div>
<div class="t" style="left:727px;top:483px;font-size:11px;line-height:11px;color:#000;width:99px;overflow:hidden;text-align:center;transform:scaleY(1.125);transform-origin:0 9px;letter-spacing:0.55px;">13/11/2018</div>
<div class="a" style="left:827px;top:481px;width:99px;height:13px;background:#ff4500"></div>
<div class="a" style="left:827px;top:494px;width:99px;height:1px;background:#e6e6e6"></div>
<div class="t" style="left:827px;top:483px;font-size:11px;line-height:11px;color:#000;width:99px;overflow:hidden;text-align:center;transform:scaleY(1.125);transform-origin:0 9px;letter-spacing:0.55px;">13/11/2018</div>
<div class="a" style="left:927px;top:481px;width:99px;height:13px;background:#ff4500"></div>
<div class="a" style="left:927px;top:494px;width:99px;height:1px;background:#e6e6e6"></div>
<div class="t" style="left:927px;top:483px;font-size:11px;line-height:11px;color:#000;width:99px;overflow:hidden;text-align:center;transform:scaleY(1.125);transform-origin:0 9px;letter-spacing:0.55px;">13/11/2018</div>
<div class="a" style="left:2px;top:508px;width:98px;height:1px;background:#e6e6e6"></div>
<div class="t" style="left:4px;top:497px;font-size:11px;line-height:11px;color:#000;transform:scaleY(1.125);transform-origin:0 9px;letter-spacing:0.55px;">14/11/2018</div>
<div class="a" style="left:101px;top:508px;width:113px;height:1px;background:#e6e6e6"></div>
<div class="t" style="left:101px;top:497px;font-size:11px;line-height:11px;color:#000;width:113px;overflow:hidden;text-align:center;transform:scaleY(1.125);transform-origin:0 9px;letter-spacing:0.55px;">01/01/2000</div>
<div class="a" style="left:215px;top:508px;width:115px;height:1px;background:#e6e6e6"></div>
<div class="t" style="left:220px;top:497px;font-size:11px;line-height:11px;color:#000;transform:scaleY(1.125);transform-origin:0 9px;">2018-11-13</div>
<div class="a" style="left:331px;top:508px;width:131px;height:1px;background:#e6e6e6"></div>
<div class="t" style="left:336px;top:497px;font-size:11px;line-height:11px;color:#000;transform:scaleY(1.125);transform-origin:0 9px;">FVPA_201800098</div>
<div class="a" style="left:463px;top:508px;width:99px;height:1px;background:#e6e6e6"></div>
<div class="t" style="left:469px;top:497px;font-size:11px;line-height:11px;color:#000;transform:scaleY(1.125);transform-origin:0 9px;">TD01</div>
<div class="a" style="left:563px;top:508px;width:63px;height:1px;background:#e6e6e6"></div>
<div class="t" style="left:568px;top:497px;font-size:11px;line-height:11px;color:#000;transform:scaleY(1.125);transform-origin:0 9px;">FPA12</div>
<div class="a" style="left:627px;top:508px;width:99px;height:1px;background:#e6e6e6"></div>
<div class="t" style="left:627px;top:497px;font-size:11px;line-height:11px;color:#000;width:99px;overflow:hidden;text-align:center;transform:scaleY(1.125);transform-origin:0 9px;letter-spacing:0.55px;">14/11/2018</div>
<div class="a" style="left:727px;top:508px;width:99px;height:1px;background:#e6e6e6"></div>
<div class="t" style="left:727px;top:497px;font-size:11px;line-height:11px;color:#000;width:99px;overflow:hidden;text-align:center;transform:scaleY(1.125);transform-origin:0 9px;letter-spacing:0.55px;">14/11/2018</div>
<div class="a" style="left:827px;top:508px;width:99px;height:1px;background:#e6e6e6"></div>
<div class="t" style="left:827px;top:497px;font-size:11px;line-height:11px;color:#000;width:99px;overflow:hidden;text-align:center;transform:scaleY(1.125);transform-origin:0 9px;letter-spacing:0.55px;">01/01/2000</div>
<div class="a" style="left:927px;top:508px;width:99px;height:1px;background:#e6e6e6"></div>
<div class="t" style="left:927px;top:497px;font-size:11px;line-height:11px;color:#000;width:99px;overflow:hidden;text-align:center;transform:scaleY(1.125);transform-origin:0 9px;letter-spacing:0.55px;">01/01/2000</div>
<div class="a" style="left:2px;top:509px;width:98px;height:13px;background:#32cd32"></div>
<div class="a" style="left:2px;top:522px;width:98px;height:1px;background:#e6e6e6"></div>
<div class="t" style="left:4px;top:511px;font-size:11px;line-height:11px;color:#000;transform:scaleY(1.125);transform-origin:0 9px;letter-spacing:0.55px;">14/11/2018</div>
<div class="a" style="left:101px;top:509px;width:113px;height:13px;background:#32cd32"></div>
<div class="a" style="left:101px;top:522px;width:113px;height:1px;background:#e6e6e6"></div>
<div class="t" style="left:101px;top:511px;font-size:11px;line-height:11px;color:#000;width:113px;overflow:hidden;text-align:center;transform:scaleY(1.125);transform-origin:0 9px;letter-spacing:0.55px;">01/01/2000</div>
<div class="a" style="left:215px;top:509px;width:115px;height:13px;background:#32cd32"></div>
<div class="a" style="left:215px;top:522px;width:115px;height:1px;background:#e6e6e6"></div>
<div class="t" style="left:220px;top:511px;font-size:11px;line-height:11px;color:#000;transform:scaleY(1.125);transform-origin:0 9px;">2018-11-13</div>
<div class="a" style="left:331px;top:509px;width:131px;height:13px;background:#32cd32"></div>
<div class="a" style="left:331px;top:522px;width:131px;height:1px;background:#e6e6e6"></div>
<div class="t" style="left:336px;top:511px;font-size:11px;line-height:11px;color:#000;transform:scaleY(1.125);transform-origin:0 9px;">FVPA_201800099</div>
<div class="a" style="left:463px;top:509px;width:99px;height:13px;background:#32cd32"></div>
<div class="a" style="left:463px;top:522px;width:99px;height:1px;background:#e6e6e6"></div>
<div class="t" style="left:469px;top:511px;font-size:11px;line-height:11px;color:#000;transform:scaleY(1.125);transform-origin:0 9px;">TD01</div>
<div class="a" style="left:563px;top:509px;width:63px;height:13px;background:#32cd32"></div>
<div class="a" style="left:563px;top:522px;width:63px;height:1px;background:#e6e6e6"></div>
<div class="t" style="left:568px;top:511px;font-size:11px;line-height:11px;color:#000;transform:scaleY(1.125);transform-origin:0 9px;">FPA12</div>
<div class="a" style="left:627px;top:509px;width:99px;height:13px;background:#32cd32"></div>
<div class="a" style="left:627px;top:522px;width:99px;height:1px;background:#e6e6e6"></div>
<div class="t" style="left:627px;top:511px;font-size:11px;line-height:11px;color:#000;width:99px;overflow:hidden;text-align:center;transform:scaleY(1.125);transform-origin:0 9px;letter-spacing:0.55px;">14/11/2018</div>
<div class="a" style="left:727px;top:509px;width:99px;height:13px;background:#32cd32"></div>
<div class="a" style="left:727px;top:522px;width:99px;height:1px;background:#e6e6e6"></div>
<div class="t" style="left:727px;top:511px;font-size:11px;line-height:11px;color:#000;width:99px;overflow:hidden;text-align:center;transform:scaleY(1.125);transform-origin:0 9px;letter-spacing:0.55px;">14/11/2018</div>
<div class="a" style="left:827px;top:509px;width:99px;height:13px;background:#32cd32"></div>
<div class="a" style="left:827px;top:522px;width:99px;height:1px;background:#e6e6e6"></div>
<div class="t" style="left:827px;top:511px;font-size:11px;line-height:11px;color:#000;width:99px;overflow:hidden;text-align:center;transform:scaleY(1.125);transform-origin:0 9px;letter-spacing:0.55px;">01/01/2000</div>
<div class="a" style="left:927px;top:509px;width:99px;height:13px;background:#32cd32"></div>
<div class="a" style="left:927px;top:522px;width:99px;height:1px;background:#e6e6e6"></div>
<div class="t" style="left:927px;top:511px;font-size:11px;line-height:11px;color:#000;width:99px;overflow:hidden;text-align:center;transform:scaleY(1.125);transform-origin:0 9px;letter-spacing:0.55px;">01/01/2000</div>
</div>
<div class="a" style="left:7px;top:589px;width:969px;height:14px;background:#e8e8e8"></div>
<svg class="a" style="left:13px;top:592px" width="5" height="8" viewBox="0 0 5 8"><path d="M4.5 0 L0 4 L4.5 8 Z" fill="#505050"/></svg>
<div class="a" style="left:25px;top:589px;width:446px;height:14px;background:linear-gradient(#f6f6f6,#e0e0e0 50%,#cfcfcf);border:1px solid #9a9a9a;border-radius:2px"></div>
<div class="a" style="left:244px;top:593px;width:1px;height:6px;background:#555"></div>
<div class="a" style="left:246px;top:593px;width:1px;height:6px;background:#555"></div>
<div class="a" style="left:248px;top:593px;width:1px;height:6px;background:#555"></div>
<div class="a" style="left:976px;top:59px;width:17px;height:530px;background:#eeeeee"></div>
<svg class="a" style="left:981px;top:66px" width="8" height="5" viewBox="0 0 8 5"><path d="M0 4.5 L4 0.5 L8 4.5 Z" fill="#5a5a5a"/></svg>
<div class="a" style="left:977px;top:358px;width:15px;height:212px;background:linear-gradient(90deg,#f6f6f6,#e2e2e2 50%,#cdcdcd);border:1px solid #9a9a9a;border-radius:2px"></div>
<div class="a" style="left:980px;top:461px;width:8px;height:1px;background:#555"></div>
<div class="a" style="left:980px;top:463px;width:8px;height:1px;background:#555"></div>
<div class="a" style="left:980px;top:465px;width:8px;height:1px;background:#555"></div>
<div class="a" style="left:939px;top:577px;width:55px;height:28px;background:#fff"></div>
<div class="t" style="left:948px;top:574px;font-size:32px;line-height:32px;font-weight:bold;color:#808080;letter-spacing:1px;transform:scaleX(1.13);transform-origin:0 0">83</div>
<div class="a" style="left:587px;top:114px;width:383px;height:384px;background:#f0f0f0;border:1px solid #979797;box-shadow:2px 2px 2px rgba(0,0,0,0.25)"></div>
<div class="a" style="left:617px;top:117px;width:1px;height:378px;background:#e2e3e3"></div>
<div class="a" style="left:618px;top:117px;width:1px;height:378px;background:#fff"></div>
<div class="t" style="left:622px;top:122px;font-size:11.7px;line-height:11.7px;color:#6d6d6d;transform:scaleY(1.12);transform-origin:0 10px;">Seleziona tutto</div>
<div class="t" style="left:622px;top:144px;font-size:11.7px;line-height:11.7px;color:#000;transform:scaleY(1.12);transform-origin:0 10px;">Visualizza campi visibili</div>
<div class="t" style="left:622px;top:166px;font-size:11.7px;line-height:11.7px;color:#000;transform:scaleY(1.12);transform-origin:0 10px;">Visualizza tutti i campi</div>
<div class="a" style="left:619px;top:187px;width:347px;height:1px;background:#e0e0e0"></div>
<div class="a" style="left:619px;top:188px;width:347px;height:1px;background:#fff"></div>
<div class="t" style="left:622px;top:196px;font-size:11.7px;line-height:11.7px;color:#000;transform:scaleY(1.12);transform-origin:0 10px;">Esegui la somma sui campi selezionati</div>
<div class="a" style="left:619px;top:217px;width:347px;height:1px;background:#e0e0e0"></div>
<div class="a" style="left:619px;top:218px;width:347px;height:1px;background:#fff"></div>
<div class="t" style="left:622px;top:226px;font-size:11.7px;line-height:11.7px;color:#000;transform:scaleY(1.12);transform-origin:0 10px;">Visualizza comando SQL</div>
<div class="a" style="left:619px;top:247px;width:347px;height:1px;background:#e0e0e0"></div>
<div class="a" style="left:619px;top:248px;width:347px;height:1px;background:#fff"></div>
<div class="t" style="left:622px;top:256px;font-size:11.7px;line-height:11.7px;color:#000;transform:scaleY(1.12);transform-origin:0 10px;">Copia il campo negli appunti</div>
<div class="t" style="left:622px;top:278px;font-size:11.7px;line-height:11.7px;color:#000;transform:scaleY(1.12);transform-origin:0 10px;">Visualizza il campo con NotePad</div>
<div class="t" style="left:622px;top:300px;font-size:11.7px;line-height:11.7px;color:#000;transform:scaleY(1.12);transform-origin:0 10px;">Visualizza il campo con WordPad</div>
<div class="t" style="left:622px;top:322px;font-size:11.7px;line-height:11.7px;color:#000;transform:scaleY(1.12);transform-origin:0 10px;">Copia le righe negli appunti</div>
<div class="a" style="left:619px;top:343px;width:347px;height:1px;background:#e0e0e0"></div>
<div class="a" style="left:619px;top:344px;width:347px;height:1px;background:#fff"></div>
<div class="t" style="left:622px;top:352px;font-size:11.7px;line-height:11.7px;color:#000;transform:scaleY(1.12);transform-origin:0 10px;">Visualizza XML tipo foglio di stile</div>
<div class="t" style="left:622px;top:374px;font-size:11.7px;line-height:11.7px;color:#000;transform:scaleY(1.12);transform-origin:0 10px;">Visualizza XML tipo foglio di stile in Pdf</div>
<div class="t" style="left:622px;top:396px;font-size:11.7px;line-height:11.7px;color:#000;transform:scaleY(1.12);transform-origin:0 10px;">Visualizza XML tipo Diplo (Crystal Report)</div>
<div class="a" style="left:619px;top:417px;width:347px;height:1px;background:#e0e0e0"></div>
<div class="a" style="left:619px;top:418px;width:347px;height:1px;background:#fff"></div>
<div class="t" style="left:622px;top:426px;font-size:11.7px;line-height:11.7px;color:#000;transform:scaleY(1.12);transform-origin:0 10px;">Salva XML con nome</div>
<div class="a" style="left:619px;top:447px;width:347px;height:1px;background:#e0e0e0"></div>
<div class="a" style="left:619px;top:448px;width:347px;height:1px;background:#fff"></div>
<div class="t" style="left:622px;top:456px;font-size:11.7px;line-height:11.7px;color:#6d6d6d;transform:scaleY(1.12);transform-origin:0 10px;">Invia Fatture XML selezionate al commercialista</div>
<div class="t" style="left:622px;top:478px;font-size:11.7px;line-height:11.7px;color:#6d6d6d;transform:scaleY(1.12);transform-origin:0 10px;">Invia Fatture XML selezionate al sistema di archiviazione</div>
<svg class="a" style="left:953px;top:324px" width="4" height="7" viewBox="0 0 4 7"><path d="M0 0 L4 3.5 L0 7 Z" fill="#000"/></svg>
<div class="a" style="left:9px;top:611px;width:982px;height:52px;border:1px solid #ff0000"></div>
<div class="t" style="left:13px;top:621px;font-size:10.9px;line-height:10.9px;color:#000;transform:scaleY(1.125);transform-origin:0 9px;">DataOraAccodatoInOutlook</div>
<div class="t" style="left:180px;top:621px;font-size:10.9px;line-height:10.9px;color:#000;transform:scaleY(1.125);transform-origin:0 9px;">Dal</div>
<div class="a" style="left:227px;top:614px;width:256px;height:20px;background:#fff;border-top:1px solid #a0a0a0;border-left:1px solid #a0a0a0;border-bottom:1px solid #fff;border-right:1px solid #fff"></div>
<div class="a" style="left:228px;top:615px;width:254px;height:1px;background:#696969"></div>
<div class="a" style="left:228px;top:615px;width:1px;height:18px;background:#696969"></div>
<div class="a" style="left:228px;top:632px;width:254px;height:1px;background:#f0f0f0"></div>
<div class="a" style="left:481px;top:615px;width:1px;height:18px;background:#f0f0f0"></div>
<div class="t" style="left:493px;top:621px;font-size:10.6px;line-height:10.6px;color:#000;transform:scaleY(1.125);transform-origin:0 9px;">al</div>
<div class="a" style="left:504px;top:614px;width:289px;height:20px;background:#fff;border-top:1px solid #a0a0a0;border-left:1px solid #a0a0a0;border-bottom:1px solid #fff;border-right:1px solid #fff"></div>
<div class="a" style="left:505px;top:615px;width:287px;height:1px;background:#696969"></div>
<div class="a" style="left:505px;top:615px;width:1px;height:18px;background:#696969"></div>
<div class="a" style="left:505px;top:632px;width:287px;height:1px;background:#f0f0f0"></div>
<div class="a" style="left:791px;top:615px;width:1px;height:18px;background:#f0f0f0"></div>
<div class="t" style="left:799px;top:621px;font-size:10.6px;line-height:10.6px;color:#000;transform:scaleY(1.125);transform-origin:0 9px;">Incluso NULL</div>
<svg class="a" style="left:873px;top:619px" width="12" height="12" viewBox="0 0 12 12"><circle cx="6" cy="6" r="5.2" fill="#fff"/><path d="M2.1 9.9 A5.5 5.5 0 0 1 9.9 2.1" stroke="#a0a0a0" stroke-width="1" fill="none"/><path d="M2.8 9.2 A4.5 4.5 0 0 1 9.2 2.8" stroke="#696969" stroke-width="1" fill="none"/><path d="M9.9 2.1 A5.5 5.5 0 0 1 2.1 9.9" stroke="#f8f8f8" stroke-width="1" fill="none"/><circle cx="6" cy="6" r="2" fill="#000"/></svg>
<div class="t" style="left:895px;top:621px;font-size:10.6px;line-height:10.6px;color:#000;transform:scaleY(1.125);transform-origin:0 9px;">Escluso NULL</div>
<svg class="a" style="left:969px;top:619px" width="12" height="12" viewBox="0 0 12 12"><circle cx="6" cy="6" r="5.2" fill="#fff"/><path d="M2.1 9.9 A5.5 5.5 0 0 1 9.9 2.1" stroke="#a0a0a0" stroke-width="1" fill="none"/><path d="M2.8 9.2 A4.5 4.5 0 0 1 9.2 2.8" stroke="#696969" stroke-width="1" fill="none"/><path d="M9.9 2.1 A5.5 5.5 0 0 1 2.1 9.9" stroke="#f8f8f8" stroke-width="1" fill="none"/></svg>
<div class="t" style="left:13px;top:645px;font-size:10.9px;line-height:10.9px;color:#000;transform:scaleY(1.125);transform-origin:0 9px;">DataOraInviatoDaOutlook</div>
<div class="t" style="left:180px;top:645px;font-size:10.9px;line-height:10.9px;color:#000;transform:scaleY(1.125);transform-origin:0 9px;">Dal</div>
<div class="a" style="left:227px;top:638px;width:256px;height:20px;background:#fff;border-top:1px solid #a0a0a0;border-left:1px solid #a0a0a0;border-bottom:1px solid #fff;border-right:1px solid #fff"></div>
<div class="a" style="left:228px;top:639px;width:254px;height:1px;background:#696969"></div>
<div class="a" style="left:228px;top:639px;width:1px;height:18px;background:#696969"></div>
<div class="a" style="left:228px;top:656px;width:254px;height:1px;background:#f0f0f0"></div>
<div class="a" style="left:481px;top:639px;width:1px;height:18px;background:#f0f0f0"></div>
<div class="t" style="left:493px;top:645px;font-size:10.6px;line-height:10.6px;color:#000;transform:scaleY(1.125);transform-origin:0 9px;">al</div>
<div class="a" style="left:504px;top:638px;width:289px;height:20px;background:#fff;border-top:1px solid #a0a0a0;border-left:1px solid #a0a0a0;border-bottom:1px solid #fff;border-right:1px solid #fff"></div>
<div class="a" style="left:505px;top:639px;width:287px;height:1px;background:#696969"></div>
<div class="a" style="left:505px;top:639px;width:1px;height:18px;background:#696969"></div>
<div class="a" style="left:505px;top:656px;width:287px;height:1px;background:#f0f0f0"></div>
<div class="a" style="left:791px;top:639px;width:1px;height:18px;background:#f0f0f0"></div>
<div class="t" style="left:799px;top:645px;font-size:10.6px;line-height:10.6px;color:#000;transform:scaleY(1.125);transform-origin:0 9px;">Incluso NULL</div>
<svg class="a" style="left:873px;top:643px" width="12" height="12" viewBox="0 0 12 12"><circle cx="6" cy="6" r="5.2" fill="#fff"/><path d="M2.1 9.9 A5.5 5.5 0 0 1 9.9 2.1" stroke="#a0a0a0" stroke-width="1" fill="none"/><path d="M2.8 9.2 A4.5 4.5 0 0 1 9.2 2.8" stroke="#696969" stroke-width="1" fill="none"/><path d="M9.9 2.1 A5.5 5.5 0 0 1 2.1 9.9" stroke="#f8f8f8" stroke-width="1" fill="none"/><circle cx="6" cy="6" r="2" fill="#000"/></svg>
<div class="t" style="left:895px;top:645px;font-size:10.6px;line-height:10.6px;color:#000;transform:scaleY(1.125);transform-origin:0 9px;">Escluso NULL</div>
<svg class="a" style="left:969px;top:643px" width="12" height="12" viewBox="0 0 12 12"><circle cx="6" cy="6" r="5.2" fill="#fff"/><path d="M2.1 9.9 A5.5 5.5 0 0 1 9.9 2.1" stroke="#a0a0a0" stroke-width="1" fill="none"/><path d="M2.8 9.2 A4.5 4.5 0 0 1 9.2 2.8" stroke="#696969" stroke-width="1" fill="none"/><path d="M9.9 2.1 A5.5 5.5 0 0 1 2.1 9.9" stroke="#f8f8f8" stroke-width="1" fill="none"/></svg>
<div class="a" style="left:5px;top:667px;width:990px;height:1px;background:#707070"></div>
<div class="a" style="left:5px;top:668px;width:990px;height:2px;background:#ff0000"></div>
<div class="a" style="left:5px;top:670px;width:990px;height:1px;background:#707070"></div>
<div class="a" style="left:5px;top:671px;width:990px;height:1px;background:#fff"></div>
<div class="a" style="left:6px;top:673px;width:1px;height:26px;background:#a0a0a0"></div>
<div class="a" style="left:7px;top:673px;width:1px;height:26px;background:#fff"></div>
<svg class="a" style="left:12px;top:672px" width="28" height="28" viewBox="0 0 28 28"><defs><linearGradient id="gdb" x1="0" x2="1"><stop offset="0" stop-color="#d4d4fc"/><stop offset="0.45" stop-color="#a8a8e4"/><stop offset="1" stop-color="#3c3c88"/></linearGradient></defs><rect x="6" y="5" width="18" height="18.5" fill="url(#gdb)"/><ellipse cx="15" cy="5" rx="9" ry="2" fill="#c8c8f4" stroke="#9090c0" stroke-width="0.6"/><ellipse cx="15" cy="23.5" rx="9" ry="1.6" fill="#48489a"/><path d="M6 10 H24 M6 13.5 H24 M6 17 H24" stroke="#8888c8" stroke-width="0.7" opacity="0.6"/><path d="M3 16.5 L8 14.5 L13 14.8 L19 17.5 L19.5 23 L16 24.5 L12 24.5 L9 25 L5 22 L3 19 Z" fill="#3c3c3c"/><path d="M4 17 L8 15.5 L13 15.8 L18 18 L12 19 L8 19.5 Z" fill="#a0a0a0"/><ellipse cx="10.2" cy="21.8" rx="2.4" ry="2.8" fill="#9ad6ff" stroke="#202020" stroke-width="0.8"/><ellipse cx="16.5" cy="21" rx="2.3" ry="2.7" fill="#9ad6ff" stroke="#202020" stroke-width="0.8"/></svg>
<div class="t" style="left:40px;top:682px;font-size:10.4px;line-height:10.4px;color:#000;transform:scaleY(1.2);transform-origin:0 9px;">Cerca</div>
<svg class="a" style="left:85px;top:675px" width="24" height="23" viewBox="0 0 24 23"><rect x="1.5" y="1.5" width="19" height="19" fill="#fcfcff" stroke="#8a8a98"/><rect x="8" y="2" width="5.5" height="18" fill="#ffb848"/><path d="M1.5 7.5 H20.5 M1.5 14.5 H20.5 M7.5 1.5 V20.5 M13.5 1.5 V20.5" stroke="#9a9aa8" stroke-width="1"/><rect x="10.5" y="13.5" width="9" height="8" fill="#fff" stroke="#303050"/><path d="M10 13 L14.5 20 L21.5 8" fill="none" stroke="#1050d8" stroke-width="2.6"/></svg>
<div class="t" style="left:110px;top:682px;font-size:10.4px;line-height:10.4px;color:#000;transform:scaleY(1.2);transform-origin:0 9px;">Impostazione</div>
<svg class="a" style="left:191px;top:684px" width="8" height="5" viewBox="0 0 8 5"><path d="M0 0 H7 L3.5 4 Z" fill="#000"/></svg>
<div class="a" style="left:207px;top:682px;width:24px;height:10px;background:#fff;border:1px solid #a4a4c4;box-shadow:0 1px 0 #8a8a98"></div>
<div class="a" style="left:209px;top:684px;width:1px;height:5px;background:#505050"></div>
<div class="t" style="left:233px;top:682px;font-size:10.2px;line-height:10.2px;color:#000;transform:scaleY(1.2);transform-origin:0 9px;">Pulisci campi di ricerca</div>
<svg class="a" style="left:361px;top:672px" width="28" height="28" viewBox="0 0 28 28"><defs><radialGradient id="ge" cx="0.45" cy="0.4" r="0.7"><stop offset="0" stop-color="#f4f4f4"/><stop offset="0.6" stop-color="#bdbdbd"/><stop offset="1" stop-color="#6a6a6a"/></radialGradient><linearGradient id="gg" x1="0" y1="0" x2="1" y2="1"><stop offset="0" stop-color="#a8f088"/><stop offset="1" stop-color="#209010"/></linearGradient></defs><path d="M12 3 H20 L24 7 V21 L20 25 H12 L8 21 V7 Z" fill="url(#ge)" stroke="#707070" stroke-width="0.8"/><path d="M4 9 L6 11 L9 11 L15 15 L13 18 L15 21 L4 21 Z" fill="url(#gg)"/><path d="M4 20 H15" stroke="#004000" stroke-width="1.4"/></svg>
<div class="t" style="left:389px;top:682px;font-size:10.4px;line-height:10.4px;color:#000;transform:scaleY(1.2);transform-origin:0 9px;">Esporta</div>
<div class="a" style="left:5px;top:705px;width:988px;height:126px;background:#fff;border-top:1px solid #a0a0a0;border-left:1px solid #a0a0a0;"></div>
<div class="a" style="left:6px;top:706px;width:987px;height:1px;background:#696969"></div>
<div class="a" style="left:6px;top:706px;width:1px;height:125px;background:#696969"></div>
<div class="a" style="left:7px;top:707px;width:986px;height:17px;background:#f0f0f0;border-top:1px solid #fff"></div>
<div class="a" style="left:7px;top:722px;width:986px;height:1px;background:#a0a0a0"></div>
<div class="a" style="left:7px;top:723px;width:986px;height:1px;background:#696969"></div>
<div class="a" style="left:7px;top:707px;width:1px;height:15px;background:#fff"></div>
<div class="a" style="left:96px;top:707px;width:1px;height:16px;background:#696969"></div>
<div class="a" style="left:95px;top:708px;width:1px;height:14px;background:#a0a0a0"></div>
<div class="t" style="left:13px;top:711px;font-size:10.6px;line-height:10.6px;color:#000;transform:scaleY(1.125);transform-origin:0 9px;">Progressivo</div>
<div class="a" style="left:97px;top:707px;width:1px;height:15px;background:#fff"></div>
<div class="a" style="left:196px;top:707px;width:1px;height:16px;background:#696969"></div>
<div class="a" style="left:195px;top:708px;width:1px;height:14px;background:#a0a0a0"></div>
<div class="t" style="left:103px;top:711px;font-size:10.6px;line-height:10.6px;color:#000;transform:scaleY(1.125);transform-origin:0 9px;">Allegati_Descrizi...</div>
<div class="a" style="left:197px;top:707px;width:1px;height:15px;background:#fff"></div>
<div class="a" style="left:296px;top:707px;width:1px;height:16px;background:#696969"></div>
<div class="a" style="left:295px;top:708px;width:1px;height:14px;background:#a0a0a0"></div>
<div class="t" style="left:203px;top:711px;font-size:10.6px;line-height:10.6px;color:#000;transform:scaleY(1.125);transform-origin:0 9px;">Allegati_Formato...</div>
<div class="a" style="left:297px;top:707px;width:1px;height:15px;background:#fff"></div>
<div class="a" style="left:524px;top:707px;width:1px;height:16px;background:#696969"></div>
<div class="a" style="left:523px;top:708px;width:1px;height:14px;background:#a0a0a0"></div>
<div class="t" style="left:303px;top:711px;font-size:10.6px;line-height:10.6px;color:#000;transform:scaleY(1.125);transform-origin:0 9px;">Allegati_NomeAttachment</div>
<div class="a" style="left:525px;top:707px;width:1px;height:15px;background:#fff"></div>
<div class="a" style="left:624px;top:707px;width:1px;height:16px;background:#696969"></div>
<div class="a" style="left:623px;top:708px;width:1px;height:14px;background:#a0a0a0"></div>
<div class="t" style="left:531px;top:711px;font-size:10.6px;line-height:10.6px;color:#000;transform:scaleY(1.125);transform-origin:0 9px;">Allegati_NomeFil...</div>
<div class="a" style="left:625px;top:707px;width:1px;height:15px;background:#fff"></div>
<div class="a" style="left:755px;top:707px;width:1px;height:16px;background:#696969"></div>
<div class="a" style="left:754px;top:708px;width:1px;height:14px;background:#a0a0a0"></div>
<div class="t" style="left:631px;top:711px;font-size:10.6px;line-height:10.6px;color:#000;transform:scaleY(1.125);transform-origin:0 9px;">Allegati_AlgoritmoComp...</div>
<div class="a" style="left:97px;top:724px;width:1px;height:107px;background:#f0f0f0"></div>
<div class="a" style="left:197px;top:724px;width:1px;height:107px;background:#f0f0f0"></div>
<div class="a" style="left:297px;top:724px;width:1px;height:107px;background:#f0f0f0"></div>
<div class="a" style="left:525px;top:724px;width:1px;height:107px;background:#f0f0f0"></div>
<div class="a" style="left:625px;top:724px;width:1px;height:107px;background:#f0f0f0"></div>
<div class="a" style="left:756px;top:724px;width:1px;height:107px;background:#f0f0f0"></div>
<div class="a" style="left:7px;top:739px;width:986px;height:1px;background:#f0f0f0"></div>
<div class="a" style="left:7px;top:753px;width:986px;height:1px;background:#f0f0f0"></div>
<div class="a" style="left:7px;top:767px;width:986px;height:1px;background:#f0f0f0"></div>
<div class="a" style="left:7px;top:781px;width:986px;height:1px;background:#f0f0f0"></div>
<div class="a" style="left:7px;top:795px;width:986px;height:1px;background:#f0f0f0"></div>
<div class="a" style="left:7px;top:809px;width:986px;height:1px;background:#f0f0f0"></div>
<div class="a" style="left:7px;top:823px;width:986px;height:1px;background:#f0f0f0"></div>
<div class="t" style="left:12px;top:728px;font-size:11px;line-height:11px;color:#000;transform:scaleY(1.125);transform-origin:0 9px;">1</div>
<div class="t" style="left:103px;top:728px;font-size:10.6px;line-height:10.6px;color:#000;transform:scaleY(1.125);transform-origin:0 9px;">Fattura</div>
<div class="t" style="left:203px;top:728px;font-size:10.6px;line-height:10.6px;color:#000;transform:scaleY(1.125);transform-origin:0 9px;">PDF</div>
<div class="t" style="left:303px;top:728px;font-size:10.6px;line-height:10.6px;color:#000;transform:scaleY(1.125);transform-origin:0 9px;">FatturaVendita_FV2B-201800080.Pdf</div>
<div class="a" style="left:960px;top:799px;width:33px;height:32px;background:#fff"></div>
<svg class="a" style="left:960px;top:799px" width="33" height="32" viewBox="0 0 33 32"><path d="M11 8 L16 5 L22 5 L22 24 L27 24 L27 28 L11 28 L11 24 L16 24 L16 12 L11 12 Z" fill="#808080"/></svg>
<div class="a" style="left:5px;top:832px;width:990px;height:90px;border:2px solid #ff0000"></div>
<div class="a" style="left:9px;top:836px;width:77px;height:81px;background:#f0f0f0;border-top:1px solid #fff;border-left:1px solid #fff;border-right:1px solid #696969;border-bottom:1px solid #696969;box-shadow:inset -1px -1px 0 #a0a0a0"></div>
<div class="t" style="left:9px;top:853.0px;font-size:10.6px;line-height:10.6px;color:#000;width:76px;overflow:hidden;text-align:center;transform:scaleY(1.125);transform-origin:0 9px;">Salva</div>
<div class="t" style="left:9px;top:866.3px;font-size:10.6px;line-height:10.6px;color:#000;width:76px;overflow:hidden;text-align:center;transform:scaleY(1.125);transform-origin:0 9px;">impostazioni</div>
<div class="t" style="left:9px;top:879.6px;font-size:10.6px;line-height:10.6px;color:#000;width:76px;overflow:hidden;text-align:center;transform:scaleY(1.125);transform-origin:0 9px;">attuali della</div>
<div class="t" style="left:9px;top:892.9px;font-size:10.6px;line-height:10.6px;color:#000;width:76px;overflow:hidden;text-align:center;transform:scaleY(1.125);transform-origin:0 9px;">finestra</div>
<div class="a" style="left:89px;top:836px;width:200px;height:16px;background:#ffffff"></div>
<svg class="a" style="left:89px;top:838px" width="11" height="11" viewBox="0 0 11 11"><rect x="0.75" y="0.75" width="9.5" height="9.5" fill="#ffffff" stroke="#000" stroke-width="1.5"/><path d="M2.2 5.3 L4.5 8.3 L8.8 2.6" fill="none" stroke="#000" stroke-width="2"/></svg>
<div class="t" style="left:105px;top:839px;font-size:11.2px;line-height:11.2px;color:#000;transform:scaleY(1.125);transform-origin:0 9px;">In attesa di risposta da SDI</div>
<div class="a" style="left:89px;top:852px;width:200px;height:16px;background:#98fb98"></div>
<svg class="a" style="left:89px;top:854px" width="11" height="11" viewBox="0 0 11 11"><rect x="0.75" y="0.75" width="9.5" height="9.5" fill="#cbfdcb" stroke="#000" stroke-width="1.5"/><path d="M2.2 5.3 L4.5 8.3 L8.8 2.6" fill="none" stroke="#000" stroke-width="2"/></svg>
<div class="t" style="left:105px;top:855px;font-size:11.2px;line-height:11.2px;color:#000;transform:scaleY(1.125);transform-origin:0 9px;">Ricevuta di consegna (OK)</div>
<div class="a" style="left:89px;top:868px;width:200px;height:16px;background:#ffff00"></div>
<svg class="a" style="left:89px;top:870px" width="11" height="11" viewBox="0 0 11 11"><rect x="0.75" y="0.75" width="9.5" height="9.5" fill="#ffff7f" stroke="#000" stroke-width="1.5"/><path d="M2.2 5.3 L4.5 8.3 L8.8 2.6" fill="none" stroke="#000" stroke-width="2"/></svg>
<div class="t" style="left:105px;top:871px;font-size:11.2px;line-height:11.2px;color:#000;transform:scaleY(1.125);transform-origin:0 9px;">Notifica mancata consegna (OK)</div>
<div class="a" style="left:89px;top:884px;width:200px;height:16px;background:#ff4500"></div>
<svg class="a" style="left:89px;top:886px" width="11" height="11" viewBox="0 0 11 11"><rect x="0.75" y="0.75" width="9.5" height="9.5" fill="#ffa27f" stroke="#000" stroke-width="1.5"/><path d="M2.2 5.3 L4.5 8.3 L8.8 2.6" fill="none" stroke="#000" stroke-width="2"/></svg>
<div class="t" style="left:105px;top:887px;font-size:11.2px;line-height:11.2px;color:#000;transform:scaleY(1.125);transform-origin:0 9px;">Notifica di scarto (KO)</div>
<div class="t" style="left:297px;top:839px;font-size:11.3px;line-height:11.3px;color:#000;width:200px;overflow:hidden;text-align:center;transform:scaleY(1.125);transform-origin:0 9px;letter-spacing:0.3px">Solo per la PA</div>
<div class="a" style="left:297px;top:852px;width:200px;height:16px;background:#32cd32"></div>
<svg class="a" style="left:297px;top:854px" width="11" height="11" viewBox="0 0 11 11"><rect x="0.75" y="0.75" width="9.5" height="9.5" fill="#98e698" stroke="#000" stroke-width="1.5"/><path d="M2.2 5.3 L4.5 8.3 L8.8 2.6" fill="none" stroke="#000" stroke-width="2"/></svg>
<div class="t" style="left:313px;top:855px;font-size:11.2px;line-height:11.2px;color:#000;transform:scaleY(1.125);transform-origin:0 9px;">Notifica di esito positivo (E001)</div>
<div class="a" style="left:297px;top:868px;width:200px;height:16px;background:#ff4500"></div>
<svg class="a" style="left:297px;top:870px" width="11" height="11" viewBox="0 0 11 11"><rect x="0.75" y="0.75" width="9.5" height="9.5" fill="#ffa27f" stroke="#000" stroke-width="1.5"/><path d="M2.2 5.3 L4.5 8.3 L8.8 2.6" fill="none" stroke="#000" stroke-width="2"/></svg>
<div class="t" style="left:313px;top:871px;font-size:11.2px;line-height:11.2px;color:#000;transform:scaleY(1.125);transform-origin:0 9px;">Notifica di esito negativo (E002)</div>
<div class="a" style="left:297px;top:884px;width:200px;height:16px;background:#ee82ee"></div>
<svg class="a" style="left:297px;top:886px" width="11" height="11" viewBox="0 0 11 11"><rect x="0.75" y="0.75" width="9.5" height="9.5" fill="#f6c0f6" stroke="#000" stroke-width="1.5"/><path d="M2.2 5.3 L4.5 8.3 L8.8 2.6" fill="none" stroke="#000" stroke-width="2"/></svg>
<div class="t" style="left:313px;top:887px;font-size:11.2px;line-height:11.2px;color:#000;transform:scaleY(1.125);transform-origin:0 9px;">Decorrenza termini (OK)</div>
<div class="a" style="left:297px;top:900px;width:200px;height:16px;background:#00ffff"></div>
<svg class="a" style="left:297px;top:902px" width="11" height="11" viewBox="0 0 11 11"><rect x="0.75" y="0.75" width="9.5" height="9.5" fill="#7fffff" stroke="#000" stroke-width="1.5"/><path d="M2.2 5.3 L4.5 8.3 L8.8 2.6" fill="none" stroke="#000" stroke-width="2"/></svg>
<div class="t" style="left:313px;top:903px;font-size:11.2px;line-height:11.2px;color:#000;transform:scaleY(1.125);transform-origin:0 9px;">Impossibilità di recapito (OK)</div>
<div class="a" style="left:505px;top:837px;width:13px;height:13px;background:#fff;border-top:1px solid #a0a0a0;border-left:1px solid #a0a0a0;border-bottom:1px solid #fff;border-right:1px solid #fff"></div>
<div class="a" style="left:506px;top:838px;width:11px;height:1px;background:#696969"></div>
<div class="a" style="left:506px;top:838px;width:1px;height:11px;background:#696969"></div>
<div class="a" style="left:506px;top:848px;width:11px;height:1px;background:#e3e3e3"></div>
<div class="a" style="left:516px;top:838px;width:1px;height:11px;background:#e3e3e3"></div>
<div class="t" style="left:523px;top:839px;font-size:10.5px;line-height:10.5px;color:#000;transform:scaleY(1.125);transform-origin:0 9px;">Escludi quelle processate correttamente</div>
<div class="a" style="left:505px;top:857px;width:13px;height:13px;background:#fff;border-top:1px solid #a0a0a0;border-left:1px solid #a0a0a0;border-bottom:1px solid #fff;border-right:1px solid #fff"></div>
<div class="a" style="left:506px;top:858px;width:11px;height:1px;background:#696969"></div>
<div class="a" style="left:506px;top:858px;width:1px;height:11px;background:#696969"></div>
<div class="a" style="left:506px;top:868px;width:11px;height:1px;background:#e3e3e3"></div>
<div class="a" style="left:516px;top:858px;width:1px;height:11px;background:#e3e3e3"></div>
<div class="t" style="left:523px;top:859px;font-size:10.5px;line-height:10.5px;color:#000;transform:scaleY(1.125);transform-origin:0 9px;">Escludi tutte quelle da considerare OK</div>
<div class="a" style="left:505px;top:881px;width:13px;height:13px;background:#fff;border-top:1px solid #a0a0a0;border-left:1px solid #a0a0a0;border-bottom:1px solid #fff;border-right:1px solid #fff"></div>
<div class="a" style="left:506px;top:882px;width:11px;height:1px;background:#696969"></div>
<div class="a" style="left:506px;top:882px;width:1px;height:11px;background:#696969"></div>
<div class="a" style="left:506px;top:892px;width:11px;height:1px;background:#e3e3e3"></div>
<div class="a" style="left:516px;top:882px;width:1px;height:11px;background:#e3e3e3"></div>
<div class="t" style="left:523px;top:883px;font-size:10.5px;line-height:10.5px;color:#000;transform:scaleY(1.125);transform-origin:0 9px;">Processate da inviare al sistema di archiviazione</div>
<div class="a" style="left:505px;top:901px;width:13px;height:13px;background:#fff;border-top:1px solid #a0a0a0;border-left:1px solid #a0a0a0;border-bottom:1px solid #fff;border-right:1px solid #fff"></div>
<div class="a" style="left:506px;top:902px;width:11px;height:1px;background:#696969"></div>
<div class="a" style="left:506px;top:902px;width:1px;height:11px;background:#696969"></div>
<div class="a" style="left:506px;top:912px;width:11px;height:1px;background:#e3e3e3"></div>
<div class="a" style="left:516px;top:902px;width:1px;height:11px;background:#e3e3e3"></div>
<div class="t" style="left:523px;top:903px;font-size:10.5px;line-height:10.5px;color:#000;transform:scaleY(1.125);transform-origin:0 9px;">Processate da inviare al commercialista</div>
<div class="a" style="left:858px;top:881px;width:13px;height:13px;background:#fff;border-top:1px solid #a0a0a0;border-left:1px solid #a0a0a0;border-bottom:1px solid #fff;border-right:1px solid #fff"></div>
<div class="a" style="left:859px;top:882px;width:11px;height:1px;background:#696969"></div>
<div class="a" style="left:859px;top:882px;width:1px;height:11px;background:#696969"></div>
<div class="a" style="left:859px;top:892px;width:11px;height:1px;background:#e3e3e3"></div>
<div class="a" style="left:869px;top:882px;width:1px;height:11px;background:#e3e3e3"></div>
<div class="t" style="left:875px;top:883px;font-size:10.5px;line-height:10.5px;color:#000;transform:scaleY(1.125);transform-origin:0 9px;">A schermo intero</div>
<div class="a" style="left:858px;top:901px;width:13px;height:13px;background:#fff;border-top:1px solid #a0a0a0;border-left:1px solid #a0a0a0;border-bottom:1px solid #fff;border-right:1px solid #fff"></div>
<div class="a" style="left:859px;top:902px;width:11px;height:1px;background:#696969"></div>
<div class="a" style="left:859px;top:902px;width:1px;height:11px;background:#696969"></div>
<div class="a" style="left:859px;top:912px;width:11px;height:1px;background:#e3e3e3"></div>
<div class="a" style="left:869px;top:902px;width:1px;height:11px;background:#e3e3e3"></div>
<div class="t" style="left:875px;top:903px;font-size:10.5px;line-height:10.5px;color:#000;transform:scaleY(1.125);transform-origin:0 9px;">Sempre in primo piano</div>
<div class="a" style="left:5px;top:922px;width:990px;height:3px;background:#f0f0f0"></div>
<div class="a" style="left:5px;top:925px;width:672px;height:20px;background:#f0f0f0;border-top:1px solid #a0a0a0;border-left:1px solid #a0a0a0;border-bottom:1px solid #fff;border-right:1px solid #fff"></div>
<div class="a" style="left:680px;top:925px;width:98px;height:20px;background:#f0f0f0;border-top:1px solid #a0a0a0;border-left:1px solid #a0a0a0;border-bottom:1px solid #fff;border-right:1px solid #fff"></div>
<div class="a" style="left:781px;top:925px;width:89px;height:20px;background:#f0f0f0;border-top:1px solid #a0a0a0;border-left:1px solid #a0a0a0;border-bottom:1px solid #fff;border-right:1px solid #fff"></div>
<div class="a" style="left:873px;top:925px;width:42px;height:20px;background:#f0f0f0;border-top:1px solid #a0a0a0;border-left:1px solid #a0a0a0;border-bottom:1px solid #fff;border-right:1px solid #fff"></div>
<div class="a" style="left:918px;top:925px;width:37px;height:20px;background:#f0f0f0;border-top:1px solid #a0a0a0;border-left:1px solid #a0a0a0;border-bottom:1px solid #fff;border-right:1px solid #fff"></div>
<div class="a" style="left:958px;top:925px;width:37px;height:20px;background:#f0f0f0;border-top:1px solid #a0a0a0;border-left:1px solid #a0a0a0;border-bottom:1px solid #fff;border-right:1px solid #fff"></div>
<svg class="a" style="left:683px;top:927px" width="14" height="16" viewBox="0 0 14 16"><defs><linearGradient id="gp" x1="0" x2="1"><stop offset="0" stop-color="#ff9a40"/><stop offset="1" stop-color="#c83010"/></linearGradient></defs><path d="M1.2 14.6 C0.8 10.5 2.5 8.4 6.5 8.4 C10.5 8.4 13 10.5 12.8 14.6 Z" fill="url(#gp)" stroke="#a82000" stroke-width="0.8"/><ellipse cx="6.8" cy="3.8" rx="3.6" ry="3" fill="#c08a10"/><ellipse cx="6.4" cy="5.4" rx="2.6" ry="2.8" fill="#ffc890"/><rect x="5.3" y="8.4" width="2.4" height="1.2" fill="#7070a0"/></svg>
<div class="t" style="left:702px;top:931px;font-size:10.1px;line-height:10.1px;color:#000;transform:scaleY(1.125);transform-origin:0 9px;">administrator</div>
<svg class="a" style="left:787px;top:926px" width="16" height="17" viewBox="0 0 16 17"><g transform="rotate(-6 8 9)"><rect x="1.5" y="3.5" width="13" height="12.5" fill="#fff" stroke="#505050"/><rect x="1.5" y="3.5" width="13" height="4.5" fill="#e04848"/><path d="M4 1 V5 M10.5 1 V5" stroke="#6a8aa0" stroke-width="1.4"/><text x="8.3" y="14.6" font-family="Liberation Sans" font-size="7.5" font-weight="bold" text-anchor="middle" fill="#000">10</text></g></svg>
<div class="t" style="left:807px;top:930px;font-size:11.7px;line-height:11.7px;color:#000;">07/12/2018</div>
<svg class="a" style="left:878px;top:926px" width="18" height="17" viewBox="0 0 18 17"><path d="M2.5 14 L6.5 1.5 M5.5 14 L9.5 1.5" stroke="#30a818" stroke-width="1.7"/><path d="M10 3 L17.5 5.5 L16 15.5 L9 13.5 Z" fill="#3a78e8"/><path d="M10 3 L16 15.5 M17.5 5.5 L9 13.5" stroke="#fff" stroke-width="1.6"/><path d="M13.8 4.2 L12.5 14.5 M9.5 8.3 L16.8 10.5" stroke="#e03818" stroke-width="1.8"/></svg>
<div class="t" style="left:899px;top:931px;font-size:11.2px;line-height:11.2px;color:#000;transform:scaleY(1.125);transform-origin:0 9px;">IT</div>
<div class="t" style="left:962px;top:931px;font-size:11.2px;line-height:11.2px;color:#000;transform:scaleY(1.125);transform-origin:0 9px;">NUM</div>
</body></html>
